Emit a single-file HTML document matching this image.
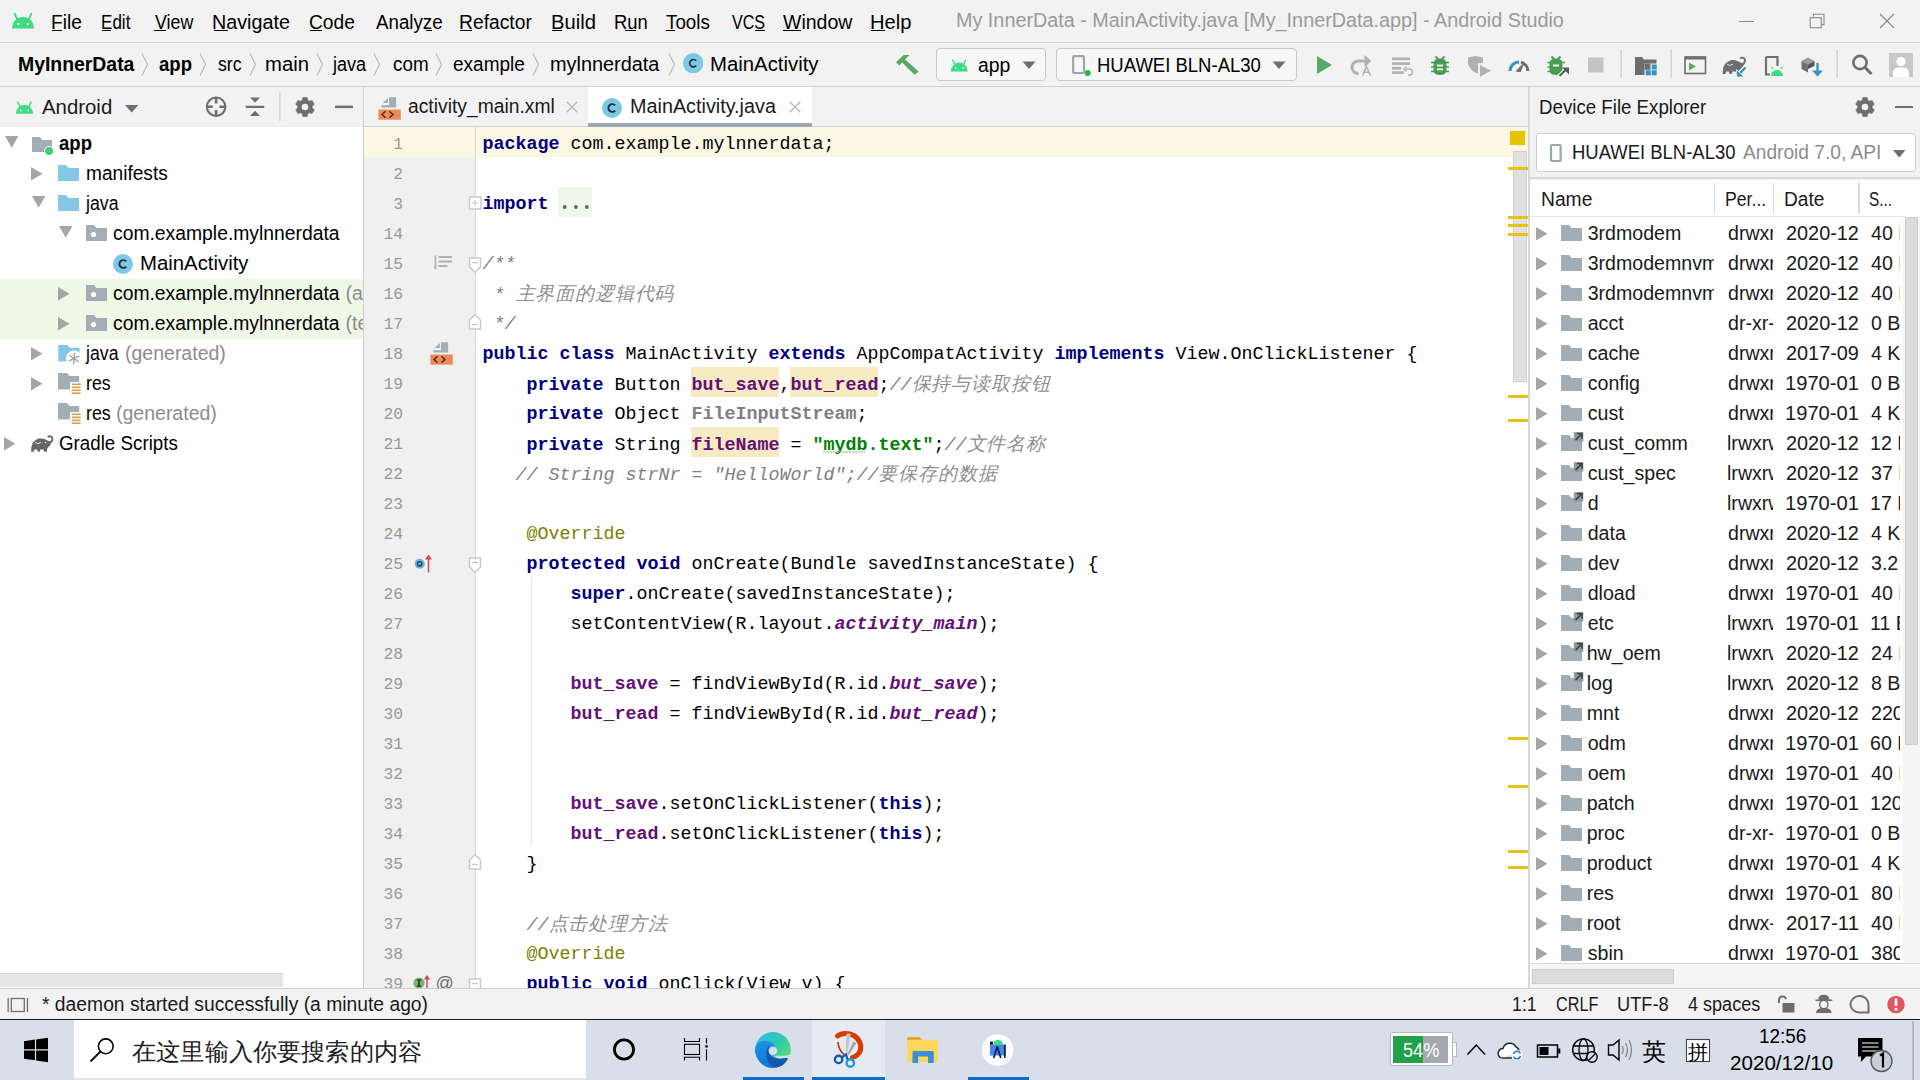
<!DOCTYPE html>
<html><head><meta charset="utf-8"><style>
*{margin:0;padding:0;box-sizing:border-box}
html,body{width:1920px;height:1080px;overflow:hidden;background:#f2f2f2;font-family:"Liberation Sans",sans-serif;color:#000;position:relative}
.a{position:absolute;white-space:nowrap}
#menubar{position:absolute;left:0;top:0;width:1920px;height:43px;background:#f2f2f2;border-bottom:1px solid #d6d6d6}
#navbar{position:absolute;left:0;top:43px;width:1920px;height:44px;background:#f2f2f2;border-bottom:1px solid #d1d1d1}
.k{color:#000080;font-weight:bold}
.s{color:#008000;font-weight:bold}
.c{color:#808080;font-style:italic}
.cj{color:#8f8f8f;font-style:italic;font-size:19px;letter-spacing:0.85px;font-weight:300}
.an{color:#808000}
.f{color:#660e7a;font-weight:bold}
.fi{color:#660e7a;font-weight:bold;font-style:italic}
.u{color:#808080;font-weight:bold}
.n{color:#000}
.dots{color:transparent}

</style></head><body>
<div id="menubar"></div>
<svg class="a" style="left:11px;top:12px" width="24" height="17" viewBox="0 0 24 16"><path d="M1 16 A11 11.5 0 0 1 23 16 Z" fill="#3ddc84"/><path d="M6.2 6.5 L3.6 1.2 M17.8 6.5 L20.4 1.2" stroke="#3ddc84" stroke-width="1.8" stroke-linecap="round"/><circle cx="7.3" cy="11.6" r="1.1" fill="#fff"/><circle cx="16.7" cy="11.6" r="1.1" fill="#fff"/></svg>
<div class="a" style="left:51.32px;top:9.71px;font-family:'Liberation Sans',sans-serif;font-size:19.6px;line-height:25px;color:#000;transform:scaleX(0.9780);transform-origin:0 0">File</div>
<div class="a" style="left:52.3px;top:30px;width:10.2px;height:1.3px;background:#000"></div>
<div class="a" style="left:101.13px;top:9.71px;font-family:'Liberation Sans',sans-serif;font-size:19.6px;line-height:25px;color:#000;transform:scaleX(0.8704);transform-origin:0 0">Edit</div>
<div class="a" style="left:101.9px;top:30px;width:9.4px;height:1.3px;background:#000"></div>
<div class="a" style="left:154.50px;top:9.71px;font-family:'Liberation Sans',sans-serif;font-size:19.6px;line-height:25px;color:#000;transform:scaleX(0.9077);transform-origin:0 0">View</div>
<div class="a" style="left:154px;top:30px;width:11.6px;height:1.3px;background:#000"></div>
<div class="a" style="left:212.49px;top:9.71px;font-family:'Liberation Sans',sans-serif;font-size:19.6px;line-height:25px;color:#000;transform:scaleX(1.0074);transform-origin:0 0">Navigate</div>
<div class="a" style="left:213.5px;top:30px;width:14.5px;height:1.3px;background:#000"></div>
<div class="a" style="left:309.42px;top:9.71px;font-family:'Liberation Sans',sans-serif;font-size:19.6px;line-height:25px;color:#000;transform:scaleX(0.9794);transform-origin:0 0">Code</div>
<div class="a" style="left:310.4px;top:30px;width:11.5px;height:1.3px;background:#000"></div>
<div class="a" style="left:376.00px;top:9.71px;font-family:'Liberation Sans',sans-serif;font-size:19.6px;line-height:25px;color:#000;transform:scaleX(0.9555);transform-origin:0 0">Analyze</div>
<div class="a" style="left:426px;top:30px;width:6.0px;height:1.3px;background:#000"></div>
<div class="a" style="left:459.42px;top:9.71px;font-family:'Liberation Sans',sans-serif;font-size:19.6px;line-height:25px;color:#000;transform:scaleX(0.9833);transform-origin:0 0">Refactor</div>
<div class="a" style="left:460.4px;top:30px;width:11.5px;height:1.3px;background:#000"></div>
<div class="a" style="left:550.97px;top:9.71px;font-family:'Liberation Sans',sans-serif;font-size:19.6px;line-height:25px;color:#000;transform:scaleX(1.0319);transform-origin:0 0">Build</div>
<div class="a" style="left:552px;top:30px;width:9.5px;height:1.3px;background:#000"></div>
<div class="a" style="left:614.06px;top:9.71px;font-family:'Liberation Sans',sans-serif;font-size:19.6px;line-height:25px;color:#000;transform:scaleX(0.9399);transform-origin:0 0">Run</div>
<div class="a" style="left:625.4px;top:30px;width:10.4px;height:1.3px;background:#000"></div>
<div class="a" style="left:666.00px;top:9.71px;font-family:'Liberation Sans',sans-serif;font-size:19.6px;line-height:25px;color:#000;transform:scaleX(0.9577);transform-origin:0 0">Tools</div>
<div class="a" style="left:666px;top:30px;width:9.4px;height:1.3px;background:#000"></div>
<div class="a" style="left:731.70px;top:9.71px;font-family:'Liberation Sans',sans-serif;font-size:19.6px;line-height:25px;color:#000;transform:scaleX(0.8205);transform-origin:0 0">VCS</div>
<div class="a" style="left:754.6px;top:30px;width:10.0px;height:1.3px;background:#000"></div>
<div class="a" style="left:783.30px;top:9.71px;font-family:'Liberation Sans',sans-serif;font-size:19.6px;line-height:25px;color:#000;transform:scaleX(0.9952);transform-origin:0 0">Window</div>
<div class="a" style="left:783.3px;top:30px;width:17.5px;height:1.3px;background:#000"></div>
<div class="a" style="left:870.47px;top:9.71px;font-family:'Liberation Sans',sans-serif;font-size:19.6px;line-height:25px;color:#000;transform:scaleX(1.0279);transform-origin:0 0">Help</div>
<div class="a" style="left:871px;top:30px;width:13.8px;height:1.3px;background:#000"></div>
<div class="a" style="left:955.99px;top:7.71px;font-family:'Liberation Sans',sans-serif;font-size:19.6px;line-height:25px;color:#9a9a9a;transform:scaleX(1.0099);transform-origin:0 0">My InnerData - MainActivity.java [My_InnerData.app] - Android Studio</div>
<div class="a" style="left:1739px;top:21px;width:14.5px;height:1.2px;background:#8a8a8a"></div>
<svg class="a" style="left:1808px;top:12px" width="20" height="18" viewBox="0 0 20 18"><path d="M5.5 4.5 V2.2 H16 V12.6 H13.4" fill="none" stroke="#8a8a8a" stroke-width="1.1"/><rect x="2.2" y="5.7" width="11" height="10" fill="none" stroke="#8a8a8a" stroke-width="1.1"/></svg>
<svg class="a" style="left:1878px;top:12px" width="18" height="18" viewBox="0 0 18 18"><path d="M2 2 L16 16 M16 2 L2 16" stroke="#8a8a8a" stroke-width="1.2"/></svg>
<div id="navbar"></div>
<div class="a" style="left:17.51px;top:51.51px;font-family:'Liberation Sans',sans-serif;font-size:19.6px;line-height:25px;color:#000;font-weight:bold;transform:scaleX(0.9899);transform-origin:0 0">MyInnerData</div>
<svg class="a" style="left:141px;top:53px" width="8" height="23" viewBox="0 0 8 23"><path d="M1 0.5 L6.5 11.5 L1 22.5" fill="none" stroke="#b4b4b4" stroke-width="1.1"/></svg>
<div class="a" style="left:159.00px;top:51.51px;font-family:'Liberation Sans',sans-serif;font-size:19.6px;line-height:25px;color:#000;font-weight:bold;transform:scaleX(0.9465);transform-origin:0 0">app</div>
<svg class="a" style="left:199px;top:53px" width="8" height="23" viewBox="0 0 8 23"><path d="M1 0.5 L6.5 11.5 L1 22.5" fill="none" stroke="#b4b4b4" stroke-width="1.1"/></svg>
<div class="a" style="left:218.00px;top:51.51px;font-family:'Liberation Sans',sans-serif;font-size:19.6px;line-height:25px;color:#000;transform:scaleX(0.9004);transform-origin:0 0">src</div>
<svg class="a" style="left:249px;top:53px" width="8" height="23" viewBox="0 0 8 23"><path d="M1 0.5 L6.5 11.5 L1 22.5" fill="none" stroke="#b4b4b4" stroke-width="1.1"/></svg>
<div class="a" style="left:264.96px;top:51.51px;font-family:'Liberation Sans',sans-serif;font-size:19.6px;line-height:25px;color:#000;transform:scaleX(1.0352);transform-origin:0 0">main</div>
<svg class="a" style="left:315.6px;top:53px" width="8" height="23" viewBox="0 0 8 23"><path d="M1 0.5 L6.5 11.5 L1 22.5" fill="none" stroke="#b4b4b4" stroke-width="1.1"/></svg>
<div class="a" style="left:333.42px;top:51.51px;font-family:'Liberation Sans',sans-serif;font-size:19.6px;line-height:25px;color:#000;transform:scaleX(0.9231);transform-origin:0 0">java</div>
<svg class="a" style="left:373px;top:53px" width="8" height="23" viewBox="0 0 8 23"><path d="M1 0.5 L6.5 11.5 L1 22.5" fill="none" stroke="#b4b4b4" stroke-width="1.1"/></svg>
<div class="a" style="left:392.70px;top:51.51px;font-family:'Liberation Sans',sans-serif;font-size:19.6px;line-height:25px;color:#000;transform:scaleX(0.9620);transform-origin:0 0">com</div>
<svg class="a" style="left:435px;top:53px" width="8" height="23" viewBox="0 0 8 23"><path d="M1 0.5 L6.5 11.5 L1 22.5" fill="none" stroke="#b4b4b4" stroke-width="1.1"/></svg>
<div class="a" style="left:453.00px;top:51.51px;font-family:'Liberation Sans',sans-serif;font-size:19.6px;line-height:25px;color:#000;transform:scaleX(0.9708);transform-origin:0 0">example</div>
<svg class="a" style="left:532px;top:53px" width="8" height="23" viewBox="0 0 8 23"><path d="M1 0.5 L6.5 11.5 L1 22.5" fill="none" stroke="#b4b4b4" stroke-width="1.1"/></svg>
<div class="a" style="left:550.49px;top:51.51px;font-family:'Liberation Sans',sans-serif;font-size:19.6px;line-height:25px;color:#000;transform:scaleX(1.0147);transform-origin:0 0">mylnnerdata</div>
<svg class="a" style="left:668px;top:53px" width="8" height="23" viewBox="0 0 8 23"><path d="M1 0.5 L6.5 11.5 L1 22.5" fill="none" stroke="#b4b4b4" stroke-width="1.1"/></svg>
<svg class="a" style="left:682.8px;top:52.599999999999994px" width="20.4" height="20.4" viewBox="0 0 20 20"><circle cx="10" cy="10" r="10" fill="#7dc8e4"/><path d="M12.9 7.6 A3.6 3.6 0 1 0 12.9 12.4" fill="none" stroke="#1f3140" stroke-width="1.6"/></svg>
<div class="a" style="left:709.96px;top:51.51px;font-family:'Liberation Sans',sans-serif;font-size:19.6px;line-height:25px;color:#000;transform:scaleX(1.0383);transform-origin:0 0">MainActivity</div>
<svg class="a" style="left:891px;top:49px" width="32" height="32" viewBox="0 0 32 32"><path d="M5 13.3 L12.7 5.9 L18.4 5.9 L13.9 10.4 L19.3 15.1 L27.6 22.5 L23.7 25.8 L16 18.4 L11.3 13.3 L8.3 16.6 Z" fill="#57a862"/></svg>
<div class="a" style="left:936px;top:48px;width:110px;height:33px;border:1px solid #c9c9c9;border-radius:4px;background:#f7f7f7"></div>
<svg class="a" style="left:950px;top:59px" width="18.5" height="12.5" viewBox="0 0 24 16"><path d="M1 16 A11 11.5 0 0 1 23 16 Z" fill="#3ddc84"/><path d="M6.2 6.5 L3.6 1.2 M17.8 6.5 L20.4 1.2" stroke="#3ddc84" stroke-width="1.8" stroke-linecap="round"/><circle cx="7.3" cy="11.6" r="1.1" fill="#fff"/><circle cx="16.7" cy="11.6" r="1.1" fill="#fff"/></svg>
<div class="a" style="left:977.50px;top:52.71px;font-family:'Liberation Sans',sans-serif;font-size:19.6px;line-height:25px;color:#000;transform:scaleX(0.9910);transform-origin:0 0">app</div>
<svg class="a" style="left:1022px;top:61px" width="14" height="9" viewBox="0 0 14 9"><path d="M0.5 0.5 H13.5 L7 8 Z" fill="#6e6e6e"/></svg>
<div class="a" style="left:1056px;top:48px;width:241px;height:33px;border:1px solid #c9c9c9;border-radius:4px;background:#f7f7f7"></div>
<svg class="a" style="left:1072px;top:55px" width="20" height="22" viewBox="0 0 20 22"><rect x="1.2" y="1.2" width="10.8" height="16.8" rx="1" fill="none" stroke="#9aa7b0" stroke-width="2.2"/><circle cx="15.7" cy="18" r="3" fill="#1ebf3a"/></svg>
<div class="a" style="left:1097.06px;top:52.71px;font-family:'Liberation Sans',sans-serif;font-size:19.6px;line-height:25px;color:#000;transform:scaleX(0.9444);transform-origin:0 0">HUAWEI BLN-AL30</div>
<svg class="a" style="left:1272px;top:61px" width="14" height="9" viewBox="0 0 14 9"><path d="M0.5 0.5 H13.5 L7 8 Z" fill="#6e6e6e"/></svg>
<svg class="a" style="left:0;top:0" width="1920" height="88" viewBox="0 0 1920 88">
<path d="M1317 56 L1332 65 L1317 74 Z" fill="#59a869"/>
<path d="M1358.5 73.5 A6.2 6.2 0 0 1 1358 61 H1366" fill="none" stroke="#afb1b3" stroke-width="3"/>
<path d="M1364.5 55 L1371.5 61 L1364.5 67 Z" fill="#afb1b3"/>
<path d="M1362.5 75.5 L1366.5 66.5 L1370.5 75.5 M1364 72.3 H1369" fill="none" stroke="#afb1b3" stroke-width="1.5"/>
<rect x="1392" y="57.5" width="18" height="2.6" fill="#afb1b3"/><rect x="1392" y="62.3" width="18" height="2.6" fill="#afb1b3"/><rect x="1392" y="67" width="9" height="2.6" fill="#afb1b3"/><rect x="1392" y="71.3" width="11.8" height="2.6" fill="#afb1b3"/>
<path d="M1406 69 H1409.5 A3 3 0 0 1 1409.5 75 H1408" fill="none" stroke="#afb1b3" stroke-width="1.4"/><path d="M1406.5 66.5 L1404 69 L1406.5 71.5" fill="none" stroke="#afb1b3" stroke-width="1.4"/>
<path d="M1435.5 56.5 L1438.5 59.5 M1444.5 56.5 L1441.5 59.5" stroke="#499c54" stroke-width="1.8"/>
<path d="M1433.5 63 Q1434 58.5 1440 58.5 Q1446 58.5 1446.5 63 L1446.5 70 Q1446.5 75 1440 75 Q1433.5 75 1433.5 70 Z" fill="#499c54"/>
<path d="M1431 62.5 H1449 M1431 67 H1449 M1431 71.5 H1449" stroke="#499c54" stroke-width="1.6"/>
<rect x="1437" y="64.6" width="6" height="1.8" fill="#fff"/><rect x="1437" y="68.4" width="6" height="1.8" fill="#fff"/>
<path d="M1468 57.5 L1475.5 56 L1483 57.5 L1483 63 L1478 63 L1478 73.8 Q1470 71 1468 64 Z" fill="#afb1b3"/><path d="M1480 65 L1491 70.8 L1480 76.7 Z" fill="#afb1b3"/>
<path d="M1510 71 A9 9 0 0 1 1519 62" fill="none" stroke="#3592c4" stroke-width="3"/><path d="M1521 62.3 A9 9 0 0 1 1527.8 71" fill="none" stroke="#6e6e6e" stroke-width="3"/><path d="M1517 71 L1523 64.5 L1520 71.5 Z" fill="#6e6e6e" stroke="#6e6e6e" stroke-width="1.5"/>
<path d="M1551.5 56.5 L1554.5 59.5 M1560.5 56.5 L1557.5 59.5" stroke="#499c54" stroke-width="1.8"/>
<path d="M1549.5 63 Q1550 58.5 1556 58.5 Q1562 58.5 1562.5 63 L1562.5 70 Q1562.5 75 1556 75 Q1549.5 75 1549.5 70 Z" fill="#499c54"/>
<path d="M1547.5 62.5 H1565 M1547.5 67 H1562 M1547.5 71.5 H1556" stroke="#499c54" stroke-width="1.6"/>
<rect x="1553" y="64.6" width="6" height="1.8" fill="#fff"/>
<path d="M1559 76.5 L1566 69.5" stroke="#fff" stroke-width="4"/><path d="M1559.5 76 L1566.5 69" stroke="#5a5a5a" stroke-width="2.2"/><path d="M1562 67.5 H1569 V74.5 Z" fill="#5a5a5a"/>
<rect x="1588" y="57.5" width="15.5" height="15" fill="#c4c4c4"/>
<rect x="1620.5" y="49.5" width="1.3" height="28.5" fill="#cfcfcf"/>
<rect x="1670.5" y="49.5" width="1.3" height="28.5" fill="#cfcfcf"/>
<rect x="1836.5" y="49.5" width="1.3" height="28.5" fill="#cfcfcf"/>
<path d="M1635 57 H1642 L1644 59.5 H1656.5 V75 H1635 Z" fill="#6e6e6e"/>
<rect x="1644.5" y="63.5" width="13" height="13" fill="#f2f2f2"/><rect x="1644.5" y="63.5" width="6" height="6.3" fill="#6e6e6e"/>
<rect x="1651.7" y="64.5" width="5" height="5" fill="#3592c4"/><rect x="1645.8" y="70.3" width="5" height="5" fill="#3592c4"/><rect x="1651.7" y="70.3" width="5" height="5" fill="#3592c4"/>
<rect x="1685" y="57" width="20.5" height="16.5" fill="none" stroke="#6e6e6e" stroke-width="1.6"/><rect x="1685" y="56.5" width="20.5" height="3" fill="#6e6e6e"/><path d="M1689 62.5 L1696 66.5 L1689 70.5 Z" fill="#59a869"/>
<g transform="translate(1717.25 49) scale(1.05)"><path d="M5.2 23.7 C5 17 7 12.5 13 10.6 C17 9.8 20 11.5 22.5 13 L25.5 13.5 L24.5 17 C23 18.5 21.5 19.5 21 21 L21 23.7 L18.2 23.7 L17.5 21.5 L14.5 21.5 L13.5 23.7 L11.8 23.7 L11 21.5 L8.5 21.5 L7.8 23.7 Z" fill="#6e6e6e"/><path d="M21.5 15.5 C25 14.8 26.6 12.6 26.4 10.5 C26.1 8.4 24 7.6 21.6 8.9" fill="none" stroke="#6e6e6e" stroke-width="1.8"/><path d="M9.3 14.3 Q11.3 16.8 14.8 14.6" fill="none" stroke="#f2f2f2" stroke-width="0.9"/></g>
<path d="M1746.5 66.5 L1738.5 74.5" stroke="#f2f2f2" stroke-width="5"/><path d="M1745.5 67.5 L1739 74" stroke="#3592c4" stroke-width="2.4"/><path d="M1736.5 69.5 V77 H1744 Z" fill="#3592c4" stroke="#f2f2f2" stroke-width="0.8"/>
<path d="M1766 57 H1777.5 V66 M1766 57 V74.5 H1770" fill="none" stroke="#6e6e6e" stroke-width="2.2"/>
<path d="M1771 76 A6 6 0 0 1 1783 76 Z" fill="#3ddc84"/><path d="M1773 69 L1771.5 66.8 M1781 69 L1782.5 66.8" stroke="#3ddc84" stroke-width="1.2"/>
<path d="M1801.5 61 L1808 57.5 L1814.5 61 L1808 64.5 Z" fill="#9a9a9a"/><path d="M1801.5 61 V69 L1808 72.5 V64.5 Z" fill="#6e6e6e"/><path d="M1814.5 61 V66 L1808 69 V64.5 Z" fill="#555"/>
<path d="M1817.5 63 V75" stroke="#3592c4" stroke-width="2.4"/><path d="M1812 70.5 L1817.5 76.5 L1823 70.5 Z" fill="#3592c4"/>
<circle cx="1860" cy="62.5" r="6.6" fill="none" stroke="#6e6e6e" stroke-width="2.6"/><path d="M1865 67.5 L1871.5 74" stroke="#6e6e6e" stroke-width="3"/>
<rect x="1889" y="53" width="24" height="24" fill="#c8c8c8"/><circle cx="1901" cy="61.5" r="4.6" fill="#fff"/><path d="M1893 77 V73 Q1893 67.5 1899 67.5 H1903 Q1909 67.5 1909 73 V77 Z" fill="#fff"/>
</svg>
<div class="a" style="left:0;top:87px;width:363px;height:40px;background:#f2f2f2"></div>
<div class="a" style="left:0;top:127px;width:363px;height:861px;background:#fff"></div>
<svg class="a" style="left:14.5px;top:100.5px" width="19" height="13" viewBox="0 0 24 16"><path d="M1 16 A11 11.5 0 0 1 23 16 Z" fill="#3ddc84"/><path d="M6.2 6.5 L3.6 1.2 M17.8 6.5 L20.4 1.2" stroke="#3ddc84" stroke-width="1.8" stroke-linecap="round"/><circle cx="7.3" cy="11.6" r="1.1" fill="#fff"/><circle cx="16.7" cy="11.6" r="1.1" fill="#fff"/></svg>
<div class="a" style="left:42.40px;top:94.71px;font-family:'Liberation Sans',sans-serif;font-size:19.6px;line-height:25px;color:#1a1a1a;transform:scaleX(1.0399);transform-origin:0 0">Android</div>
<svg class="a" style="left:125px;top:104.5px" width="14" height="8" viewBox="0 0 14 8"><path d="M0 0 H13.4 L6.7 7.6 Z" fill="#6e6e6e"/></svg>
<svg class="a" style="left:200px;top:90px" width="170" height="34" viewBox="200 90 170 34"><circle cx="216.1" cy="106.7" r="9.2" fill="none" stroke="#6e6e6e" stroke-width="2.2"/><path d="M207 106.7 H212.8 M219.4 106.7 H225.2 M216.1 97.6 V103.4 M216.1 110 V115.8" stroke="#6e6e6e" stroke-width="2.6"/><path d="M250 97.5 H260 L255 102.8 Z M250 116 H260 L255 110.7 Z" fill="#6e6e6e"/><rect x="245.7" y="105.8" width="18.5" height="2.2" fill="#6e6e6e"/><rect x="279.3" y="92" width="1.2" height="29" fill="#cfcfcf"/><rect x="335" y="105.6" width="18" height="2.5" fill="#6e6e6e"/></svg>
<svg class="a" style="left:0;top:0;overflow:visible" width="1" height="1"><path d="M302.08 100.44 L302.82 97.55 L307.18 97.55 L307.92 100.44 L309.22 101.19 L312.09 100.38 L314.28 104.16 L312.14 106.25 L312.14 107.75 L314.28 109.84 L312.09 113.62 L309.22 112.81 L307.92 113.56 L307.18 116.45 L302.82 116.45 L302.08 113.56 L300.78 112.81 L297.91 113.62 L295.72 109.84 L297.86 107.75 L297.86 106.25 L295.72 104.16 L297.91 100.38 L300.78 101.19 Z" fill="#6e6e6e" stroke="#6e6e6e" stroke-width="0.6" stroke-linejoin="round"/><circle cx="305" cy="107" r="3.30" fill="#f2f2f2"/></svg>
<div class="a" style="left:0;top:279px;width:363px;height:60px;background:#eff7e7"></div>
<svg class="a" style="left:4.5px;top:136px" width="14" height="12" viewBox="0 0 14 12"><path d="M0 0 H13.4 L6.7 11.8 Z" fill="#a5a5a5"/></svg>
<svg class="a" style="left:31.7px;top:136.7px" width="20.5" height="15.8" viewBox="0 0 21 16"><path d="M0 0 H8 L10.5 3 H21 V16 H0 Z" fill="#a2adb6"/></svg>
<div class="a" style="left:43.7px;top:145.5px;width:10px;height:10px;border-radius:50%;background:#3ecf6e;border:1.3px solid #fff"></div>
<div class="a" style="left:59.40px;top:131.11px;font-family:'Liberation Sans',sans-serif;font-size:19.6px;line-height:25px;color:#000;font-weight:bold;transform:scaleX(0.9465);transform-origin:0 0">app</div>
<svg class="a" style="left:31px;top:166.6px" width="12" height="14" viewBox="0 0 12 14"><path d="M0 0 L11.5 6.8 L0 13.6 Z" fill="#a5a5a5"/></svg>
<svg class="a" style="left:58.3px;top:165px" width="21" height="16" viewBox="0 0 21 16"><path d="M0 0 H8 L10.5 3 H21 V16 H0 Z" fill="#87c7e6"/></svg>
<div class="a" style="left:85.72px;top:161.01px;font-family:'Liberation Sans',sans-serif;font-size:19.6px;line-height:25px;color:#000;transform:scaleX(0.9753);transform-origin:0 0">manifests</div>
<svg class="a" style="left:31.7px;top:196px" width="14" height="12" viewBox="0 0 14 12"><path d="M0 0 H13.4 L6.7 11.8 Z" fill="#a5a5a5"/></svg>
<svg class="a" style="left:58.3px;top:195px" width="21" height="16" viewBox="0 0 21 16"><path d="M0 0 H8 L10.5 3 H21 V16 H0 Z" fill="#87c7e6"/></svg>
<div class="a" style="left:86.40px;top:191.01px;font-family:'Liberation Sans',sans-serif;font-size:19.6px;line-height:25px;color:#000;transform:scaleX(0.9043);transform-origin:0 0">java</div>
<svg class="a" style="left:59px;top:226px" width="14" height="12" viewBox="0 0 14 12"><path d="M0 0 H13.4 L6.7 11.8 Z" fill="#a5a5a5"/></svg>
<svg class="a" style="left:85.5px;top:225px" width="21" height="16" viewBox="0 0 21 16"><path d="M0 0 H8 L10.5 3 H21 V16 H0 Z" fill="#a2adb6"/><circle cx="7.5" cy="9.5" r="2.6" fill="#fff"/></svg>
<div class="a" style="left:113.30px;top:221.01px;font-family:'Liberation Sans',sans-serif;font-size:19.6px;line-height:25px;color:#000;transform:scaleX(0.9861);transform-origin:0 0">com.example.mylnnerdata</div>
<svg class="a" style="left:112.8px;top:253.8px" width="20" height="20" viewBox="0 0 20 20"><circle cx="10" cy="10" r="10" fill="#7dc8e4"/><path d="M13.2 7.4 A3.9 3.9 0 1 0 13.2 12.6" fill="none" stroke="#1f3140" stroke-width="1.9"/></svg>
<div class="a" style="left:139.66px;top:251.01px;font-family:'Liberation Sans',sans-serif;font-size:19.6px;line-height:25px;color:#000;transform:scaleX(1.0383);transform-origin:0 0">MainActivity</div>
<svg class="a" style="left:58px;top:286.6px" width="12" height="14" viewBox="0 0 12 14"><path d="M0 0 L11.5 6.8 L0 13.6 Z" fill="#a5a5a5"/></svg>
<svg class="a" style="left:85.5px;top:285px" width="21" height="16" viewBox="0 0 21 16"><path d="M0 0 H8 L10.5 3 H21 V16 H0 Z" fill="#a2adb6"/><circle cx="7.5" cy="9.5" r="2.6" fill="#fff"/></svg>
<div class="a" style="left:113.30px;top:281.01px;font-family:'Liberation Sans',sans-serif;font-size:19.6px;line-height:25px;color:#000;transform:scaleX(0.9861);transform-origin:0 0">com.example.mylnnerdata</div>
<div class="a" style="left:346px;top:278px;width:17px;height:30px;overflow:hidden"><div style="position:absolute;left:-346px;top:0"><div class="a" style="left:345.50px;top:3.01px;font-family:'Liberation Sans',sans-serif;font-size:19.6px;line-height:25px;color:#8c8c8c">(androidTest)</div></div></div>
<svg class="a" style="left:58px;top:316.6px" width="12" height="14" viewBox="0 0 12 14"><path d="M0 0 L11.5 6.8 L0 13.6 Z" fill="#a5a5a5"/></svg>
<svg class="a" style="left:85.5px;top:315px" width="21" height="16" viewBox="0 0 21 16"><path d="M0 0 H8 L10.5 3 H21 V16 H0 Z" fill="#a2adb6"/><circle cx="7.5" cy="9.5" r="2.6" fill="#fff"/></svg>
<div class="a" style="left:113.30px;top:311.01px;font-family:'Liberation Sans',sans-serif;font-size:19.6px;line-height:25px;color:#000;transform:scaleX(0.9861);transform-origin:0 0">com.example.mylnnerdata</div>
<div class="a" style="left:346px;top:308px;width:17px;height:30px;overflow:hidden"><div style="position:absolute;left:-346px;top:0"><div class="a" style="left:345.50px;top:3.01px;font-family:'Liberation Sans',sans-serif;font-size:19.6px;line-height:25px;color:#8c8c8c">(test)</div></div></div>
<svg class="a" style="left:31px;top:346.6px" width="12" height="14" viewBox="0 0 12 14"><path d="M0 0 L11.5 6.8 L0 13.6 Z" fill="#a5a5a5"/></svg>
<svg class="a" style="left:55px;top:338px" width="32" height="32" viewBox="0 0 32 32"><path d="M3.3 7.1 H12.3 L14.8 9.8 H24.6 V23.4 H3.3 Z" fill="#87c7e6"/><circle cx="19" cy="20.4" r="8" fill="#fff"/><g fill="#9aa4ab" transform="translate(19 20.4)"><path d="M0 -0.8 C-1.2 -3.2 -0.6 -5.6 1.6 -6.2 C0.4 -4.4 0.8 -2.4 1.2 -0.4 Z" transform="rotate(0)"/><path d="M0 -0.8 C-1.2 -3.2 -0.6 -5.6 1.6 -6.2 C0.4 -4.4 0.8 -2.4 1.2 -0.4 Z" transform="rotate(60)"/><path d="M0 -0.8 C-1.2 -3.2 -0.6 -5.6 1.6 -6.2 C0.4 -4.4 0.8 -2.4 1.2 -0.4 Z" transform="rotate(120)"/><path d="M0 -0.8 C-1.2 -3.2 -0.6 -5.6 1.6 -6.2 C0.4 -4.4 0.8 -2.4 1.2 -0.4 Z" transform="rotate(180)"/><path d="M0 -0.8 C-1.2 -3.2 -0.6 -5.6 1.6 -6.2 C0.4 -4.4 0.8 -2.4 1.2 -0.4 Z" transform="rotate(240)"/><path d="M0 -0.8 C-1.2 -3.2 -0.6 -5.6 1.6 -6.2 C0.4 -4.4 0.8 -2.4 1.2 -0.4 Z" transform="rotate(300)"/><circle r="1"/></g></svg>
<div class="a" style="left:86.40px;top:341.01px;font-family:'Liberation Sans',sans-serif;font-size:19.6px;line-height:25px;color:#000;transform:scaleX(0.9043);transform-origin:0 0">java</div>
<div class="a" style="left:124.70px;top:341.01px;font-family:'Liberation Sans',sans-serif;font-size:19.6px;line-height:25px;color:#8c8c8c;transform:scaleX(0.9953);transform-origin:0 0">(generated)</div>
<svg class="a" style="left:31px;top:376.6px" width="12" height="14" viewBox="0 0 12 14"><path d="M0 0 L11.5 6.8 L0 13.6 Z" fill="#a5a5a5"/></svg>
<svg class="a" style="left:58.3px;top:373px" width="24" height="22" viewBox="0 0 24 22"><path d="M0 0 H9 L11.6 3 H21.2 V16.4 H0 Z" fill="#a2adb6"/><rect x="12.1" y="9" width="11" height="13" fill="#fff"/><rect x="13.7" y="10.5" width="8.9" height="1.6" fill="#d9a050"/><rect x="13.7" y="13.5" width="8.9" height="1.6" fill="#d9a050"/><rect x="13.7" y="16.5" width="8.9" height="1.6" fill="#d9a050"/><rect x="13.7" y="19.4" width="8.9" height="1.6" fill="#d9a050"/></svg>
<div class="a" style="left:85.79px;top:371.01px;font-family:'Liberation Sans',sans-serif;font-size:19.6px;line-height:25px;color:#000;transform:scaleX(0.9083);transform-origin:0 0">res</div>
<svg class="a" style="left:58.3px;top:403px" width="24" height="22" viewBox="0 0 24 22"><path d="M0 0 H9 L11.6 3 H21.2 V16.4 H0 Z" fill="#a2adb6"/><rect x="12.1" y="9" width="11" height="13" fill="#fff"/><rect x="13.7" y="10.5" width="8.9" height="1.6" fill="#d9a050"/><rect x="13.7" y="13.5" width="8.9" height="1.6" fill="#d9a050"/><rect x="13.7" y="16.5" width="8.9" height="1.6" fill="#d9a050"/><rect x="13.7" y="19.4" width="8.9" height="1.6" fill="#d9a050"/></svg>
<div class="a" style="left:85.79px;top:401.01px;font-family:'Liberation Sans',sans-serif;font-size:19.6px;line-height:25px;color:#000;transform:scaleX(0.9083);transform-origin:0 0">res</div>
<div class="a" style="left:115.70px;top:401.01px;font-family:'Liberation Sans',sans-serif;font-size:19.6px;line-height:25px;color:#8c8c8c;transform:scaleX(0.9953);transform-origin:0 0">(generated)</div>
<svg class="a" style="left:4px;top:436.6px" width="12" height="14" viewBox="0 0 12 14"><path d="M0 0 L11.5 6.8 L0 13.6 Z" fill="#a5a5a5"/></svg>
<svg class="a" style="left:26px;top:428px" width="32" height="32" viewBox="0 0 32 32"><path d="M5.2 23.7 C5 17 7 12.5 13 10.6 C17 9.8 20 11.5 22.5 13 L25.5 13.5 L24.5 17 C23 18.5 21.5 19.5 21 21 L21 23.7 L18.2 23.7 L17.5 21.5 L14.5 21.5 L13.5 23.7 L11.8 23.7 L11 21.5 L8.5 21.5 L7.8 23.7 Z" fill="#666"/><path d="M21.5 15.5 C25 14.8 26.6 12.6 26.4 10.5 C26.1 8.4 24 7.6 21.6 8.9" fill="none" stroke="#666" stroke-width="1.8"/><path d="M9.3 14.3 Q11.3 16.8 14.8 14.6" fill="none" stroke="#fff" stroke-width="0.9"/><circle cx="19.6" cy="14.5" r="0.7" fill="#fff"/></svg>
<div class="a" style="left:59.30px;top:431.01px;font-family:'Liberation Sans',sans-serif;font-size:19.6px;line-height:25px;color:#000;transform:scaleX(0.9571);transform-origin:0 0">Gradle Scripts</div>
<div class="a" style="left:0;top:973px;width:283px;height:14px;background:#e4e4e4;border-top:1px solid #d4d4d4"></div>
<div class="a" style="left:364px;top:87px;width:1164px;height:40px;background:#f2f2f2;border-bottom:1px solid #d1d1d1"></div>
<div class="a" style="left:363px;top:87px;width:1px;height:901px;background:#d1d1d1"></div>
<svg class="a" style="left:374px;top:92px" width="32" height="32" viewBox="0 0 32 32"><path d="M15 5.3 H22.1 V15.6 H7.4 V13.3 H15 Z" fill="#a2adb6"/><path d="M8.9 11 L13.9 6 V11 Z" fill="#a2adb6"/><rect x="4.4" y="17.5" width="22.4" height="10.2" fill="#ea8a5e"/><path d="M11.6 19.3 L8 22.5 L11.6 25.8 M15.4 19.3 L19 22.5 L15.4 25.8" fill="none" stroke="#5e2a10" stroke-width="1.5"/></svg>
<div class="a" style="left:407.50px;top:94.31px;font-family:'Liberation Sans',sans-serif;font-size:19.6px;line-height:25px;color:#1a1a1a;transform:scaleX(0.9845);transform-origin:0 0">activity_main.xml</div>
<svg class="a" style="left:566px;top:100.5px" width="12" height="12" viewBox="0 0 12 12"><path d="M0.7 0.7 L11.3 11.3 M11.3 0.7 L0.7 11.3" stroke="#b8b8b8" stroke-width="1.4"/></svg>
<div class="a" style="left:588px;top:87px;width:224px;height:36px;background:#fff"></div>
<div class="a" style="left:588px;top:123px;width:224px;height:4px;background:#9ca7b8"></div>
<svg class="a" style="left:602px;top:98px" width="20" height="20" viewBox="0 0 20 20"><circle cx="10" cy="10" r="10" fill="#7dc8e4"/><path d="M13.2 7.4 A3.9 3.9 0 1 0 13.2 12.6" fill="none" stroke="#1f3140" stroke-width="1.9"/></svg>
<div class="a" style="left:629.99px;top:94.31px;font-family:'Liberation Sans',sans-serif;font-size:19.6px;line-height:25px;color:#1a1a1a;transform:scaleX(1.0100);transform-origin:0 0">MainActivity.java</div>
<svg class="a" style="left:788.5px;top:101px" width="12" height="12" viewBox="0 0 12 12"><path d="M0.7 0.7 L11.3 11.3 M11.3 0.7 L0.7 11.3" stroke="#b8b8b8" stroke-width="1.4"/></svg>
<div class="a" style="left:364px;top:127px;width:1164px;height:861px;background:#fff;overflow:hidden">
<div class="a" style="left:0;top:0;width:111px;height:861px;background:#f0f0f0"></div>
<div class="a" style="left:110.5px;top:0;width:1.5px;height:861px;background:#d9d9d9"></div>
<div class="a" style="left:0;top:0;width:111px;height:30px;background:#fcf7e2"></div>
<div class="a" style="left:112px;top:0;width:1052px;height:30px;background:#fdf8e4"></div>
</div>
<div class="a" style="left:339px;top:129.6px;width:64px;text-align:right;font-family:'Liberation Mono',monospace;font-size:16.3px;line-height:30px;color:#999">1</div>
<div class="a" style="left:482.5px;top:130.0px;white-space:pre;font-family:'Liberation Mono',monospace;font-size:18.33px;line-height:30px"><span class="k">package</span><span class="n"> com.example.mylnnerdata;</span></div>
<div class="a" style="left:339px;top:159.6px;width:64px;text-align:right;font-family:'Liberation Mono',monospace;font-size:16.3px;line-height:30px;color:#999">2</div>
<div class="a" style="left:339px;top:189.6px;width:64px;text-align:right;font-family:'Liberation Mono',monospace;font-size:16.3px;line-height:30px;color:#999">3</div>
<div class="a" style="left:558.0px;top:187px;width:33.5px;height:30px;background:#edf7ea"></div>
<div class="a" style="left:482.5px;top:190.0px;white-space:pre;font-family:'Liberation Mono',monospace;font-size:18.33px;line-height:30px"><span class="k">import</span><span class="n"> </span><span class="dots">...</span></div>
<div class="a" style="left:339px;top:219.6px;width:64px;text-align:right;font-family:'Liberation Mono',monospace;font-size:16.3px;line-height:30px;color:#999">14</div>
<div class="a" style="left:339px;top:249.6px;width:64px;text-align:right;font-family:'Liberation Mono',monospace;font-size:16.3px;line-height:30px;color:#999">15</div>
<div class="a" style="left:482.5px;top:250.0px;white-space:pre;font-family:'Liberation Mono',monospace;font-size:18.33px;line-height:30px"><span class="c">/**</span></div>
<div class="a" style="left:339px;top:279.6px;width:64px;text-align:right;font-family:'Liberation Mono',monospace;font-size:16.3px;line-height:30px;color:#999">16</div>
<div class="a" style="left:482.5px;top:280.0px;white-space:pre;font-family:'Liberation Mono',monospace;font-size:18.33px;line-height:30px"><span class="c"> * </span><span class="cj">主界面的逻辑代码</span></div>
<div class="a" style="left:339px;top:309.6px;width:64px;text-align:right;font-family:'Liberation Mono',monospace;font-size:16.3px;line-height:30px;color:#999">17</div>
<div class="a" style="left:482.5px;top:310.0px;white-space:pre;font-family:'Liberation Mono',monospace;font-size:18.33px;line-height:30px"><span class="c"> */</span></div>
<div class="a" style="left:339px;top:339.6px;width:64px;text-align:right;font-family:'Liberation Mono',monospace;font-size:16.3px;line-height:30px;color:#999">18</div>
<div class="a" style="left:482.5px;top:340.0px;white-space:pre;font-family:'Liberation Mono',monospace;font-size:18.33px;line-height:30px"><span class="k">public</span><span class="n"> </span><span class="k">class</span><span class="n"> MainActivity </span><span class="k">extends</span><span class="n"> AppCompatActivity </span><span class="k">implements</span><span class="n"> View.OnClickListener {</span></div>
<div class="a" style="left:339px;top:369.6px;width:64px;text-align:right;font-family:'Liberation Mono',monospace;font-size:16.3px;line-height:30px;color:#999">19</div>
<div class="a" style="left:691.0px;top:367px;width:88.0px;height:30px;background:#f5eac2"></div>
<div class="a" style="left:790.0px;top:367px;width:88.0px;height:30px;background:#f5eac2"></div>
<div class="a" style="left:482.5px;top:370.0px;white-space:pre;font-family:'Liberation Mono',monospace;font-size:18.33px;line-height:30px"><span class="n">    </span><span class="k">private</span><span class="n"> Button </span><span class="f">but_save</span><span class="n">,</span><span class="f">but_read</span><span class="n">;</span><span class="c">//</span><span class="cj">保持与读取按钮</span></div>
<div class="a" style="left:339px;top:399.6px;width:64px;text-align:right;font-family:'Liberation Mono',monospace;font-size:16.3px;line-height:30px;color:#999">20</div>
<div class="a" style="left:482.5px;top:400.0px;white-space:pre;font-family:'Liberation Mono',monospace;font-size:18.33px;line-height:30px"><span class="n">    </span><span class="k">private</span><span class="n"> Object </span><span class="u">FileInputStream</span><span class="n">;</span></div>
<div class="a" style="left:339px;top:429.6px;width:64px;text-align:right;font-family:'Liberation Mono',monospace;font-size:16.3px;line-height:30px;color:#999">21</div>
<div class="a" style="left:691.0px;top:427px;width:88.0px;height:30px;background:#f5eac2"></div>
<div class="a" style="left:482.5px;top:430.0px;white-space:pre;font-family:'Liberation Mono',monospace;font-size:18.33px;line-height:30px"><span class="n">    </span><span class="k">private</span><span class="n"> String </span><span class="f">fileName</span><span class="n"> = </span><span class="s">&quot;mydb.text&quot;</span><span class="n">;</span><span class="c">//</span><span class="cj">文件名称</span></div>
<div class="a" style="left:339px;top:459.6px;width:64px;text-align:right;font-family:'Liberation Mono',monospace;font-size:16.3px;line-height:30px;color:#999">22</div>
<div class="a" style="left:482.5px;top:460.0px;white-space:pre;font-family:'Liberation Mono',monospace;font-size:18.33px;line-height:30px"><span class="n">   </span><span class="c">// String strNr = &quot;HelloWorld&quot;;//</span><span class="cj">要保存的数据</span></div>
<div class="a" style="left:339px;top:489.6px;width:64px;text-align:right;font-family:'Liberation Mono',monospace;font-size:16.3px;line-height:30px;color:#999">23</div>
<div class="a" style="left:339px;top:519.6px;width:64px;text-align:right;font-family:'Liberation Mono',monospace;font-size:16.3px;line-height:30px;color:#999">24</div>
<div class="a" style="left:482.5px;top:520.0px;white-space:pre;font-family:'Liberation Mono',monospace;font-size:18.33px;line-height:30px"><span class="n">    </span><span class="an">@Override</span></div>
<div class="a" style="left:339px;top:549.6px;width:64px;text-align:right;font-family:'Liberation Mono',monospace;font-size:16.3px;line-height:30px;color:#999">25</div>
<div class="a" style="left:482.5px;top:550.0px;white-space:pre;font-family:'Liberation Mono',monospace;font-size:18.33px;line-height:30px"><span class="n">    </span><span class="k">protected</span><span class="n"> </span><span class="k">void</span><span class="n"> onCreate(Bundle savedInstanceState) {</span></div>
<div class="a" style="left:339px;top:579.6px;width:64px;text-align:right;font-family:'Liberation Mono',monospace;font-size:16.3px;line-height:30px;color:#999">26</div>
<div class="a" style="left:482.5px;top:580.0px;white-space:pre;font-family:'Liberation Mono',monospace;font-size:18.33px;line-height:30px"><span class="n">        </span><span class="k">super</span><span class="n">.onCreate(savedInstanceState);</span></div>
<div class="a" style="left:339px;top:609.6px;width:64px;text-align:right;font-family:'Liberation Mono',monospace;font-size:16.3px;line-height:30px;color:#999">27</div>
<div class="a" style="left:482.5px;top:610.0px;white-space:pre;font-family:'Liberation Mono',monospace;font-size:18.33px;line-height:30px"><span class="n">        setContentView(R.layout.</span><span class="fi">activity_main</span><span class="n">);</span></div>
<div class="a" style="left:339px;top:639.6px;width:64px;text-align:right;font-family:'Liberation Mono',monospace;font-size:16.3px;line-height:30px;color:#999">28</div>
<div class="a" style="left:339px;top:669.6px;width:64px;text-align:right;font-family:'Liberation Mono',monospace;font-size:16.3px;line-height:30px;color:#999">29</div>
<div class="a" style="left:482.5px;top:670.0px;white-space:pre;font-family:'Liberation Mono',monospace;font-size:18.33px;line-height:30px"><span class="n">        </span><span class="f">but_save</span><span class="n"> = findViewById(R.id.</span><span class="fi">but_save</span><span class="n">);</span></div>
<div class="a" style="left:339px;top:699.6px;width:64px;text-align:right;font-family:'Liberation Mono',monospace;font-size:16.3px;line-height:30px;color:#999">30</div>
<div class="a" style="left:482.5px;top:700.0px;white-space:pre;font-family:'Liberation Mono',monospace;font-size:18.33px;line-height:30px"><span class="n">        </span><span class="f">but_read</span><span class="n"> = findViewById(R.id.</span><span class="fi">but_read</span><span class="n">);</span></div>
<div class="a" style="left:339px;top:729.6px;width:64px;text-align:right;font-family:'Liberation Mono',monospace;font-size:16.3px;line-height:30px;color:#999">31</div>
<div class="a" style="left:339px;top:759.6px;width:64px;text-align:right;font-family:'Liberation Mono',monospace;font-size:16.3px;line-height:30px;color:#999">32</div>
<div class="a" style="left:339px;top:789.6px;width:64px;text-align:right;font-family:'Liberation Mono',monospace;font-size:16.3px;line-height:30px;color:#999">33</div>
<div class="a" style="left:482.5px;top:790.0px;white-space:pre;font-family:'Liberation Mono',monospace;font-size:18.33px;line-height:30px"><span class="n">        </span><span class="f">but_save</span><span class="n">.setOnClickListener(</span><span class="k">this</span><span class="n">);</span></div>
<div class="a" style="left:339px;top:819.6px;width:64px;text-align:right;font-family:'Liberation Mono',monospace;font-size:16.3px;line-height:30px;color:#999">34</div>
<div class="a" style="left:482.5px;top:820.0px;white-space:pre;font-family:'Liberation Mono',monospace;font-size:18.33px;line-height:30px"><span class="n">        </span><span class="f">but_read</span><span class="n">.setOnClickListener(</span><span class="k">this</span><span class="n">);</span></div>
<div class="a" style="left:339px;top:849.6px;width:64px;text-align:right;font-family:'Liberation Mono',monospace;font-size:16.3px;line-height:30px;color:#999">35</div>
<div class="a" style="left:482.5px;top:850.0px;white-space:pre;font-family:'Liberation Mono',monospace;font-size:18.33px;line-height:30px"><span class="n">    }</span></div>
<div class="a" style="left:339px;top:879.6px;width:64px;text-align:right;font-family:'Liberation Mono',monospace;font-size:16.3px;line-height:30px;color:#999">36</div>
<div class="a" style="left:339px;top:909.6px;width:64px;text-align:right;font-family:'Liberation Mono',monospace;font-size:16.3px;line-height:30px;color:#999">37</div>
<div class="a" style="left:482.5px;top:910.0px;white-space:pre;font-family:'Liberation Mono',monospace;font-size:18.33px;line-height:30px"><span class="n">    </span><span class="c">//</span><span class="cj">点击处理方法</span></div>
<div class="a" style="left:339px;top:939.6px;width:64px;text-align:right;font-family:'Liberation Mono',monospace;font-size:16.3px;line-height:30px;color:#999">38</div>
<div class="a" style="left:482.5px;top:940.0px;white-space:pre;font-family:'Liberation Mono',monospace;font-size:18.33px;line-height:30px"><span class="n">    </span><span class="an">@Override</span></div>
<div class="a" style="left:339px;top:969.6px;width:64px;text-align:right;font-family:'Liberation Mono',monospace;font-size:16.3px;line-height:30px;color:#999">39</div>
<div class="a" style="left:482.5px;top:970.0px;white-space:pre;font-family:'Liberation Mono',monospace;font-size:18.33px;line-height:30px"><span class="n">    </span><span class="k">public</span><span class="n"> </span><span class="k">void</span><span class="n"> onClick(View v) {</span></div>
<svg class="a" style="left:0;top:0;overflow:visible" width="1" height="1"><circle cx="564.7" cy="207" r="1.9" fill="#5a6b5a"/><circle cx="575.9" cy="207" r="1.9" fill="#5a6b5a"/><circle cx="586.8" cy="207" r="1.9" fill="#5a6b5a"/></svg>
<svg class="a" style="left:823px;top:450px" width="44" height="4" viewBox="0 0 44 4"><path d="M0 3 L1.5 0.8 L3 3 L4.5 0.8 L6 3 L7.5 0.8 L9 3 L10.5 0.8 L12 3 L13.5 0.8 L15 3 L16.5 0.8 L18 3 L19.5 0.8 L21 3 L22.5 0.8 L24 3 L25.5 0.8 L27 3 L28.5 0.8 L30 3 L31.5 0.8 L33 3 L34.5 0.8 L36 3 L37.5 0.8 L39 3 L40.5 0.8 L42 3" fill="none" stroke="#a8c8a8" stroke-width="0.9"/></svg>
<div class="a" style="left:531px;top:578px;width:1px;height:267px;background:#e4e4e4"></div>
<svg class="a" style="left:0;top:0;overflow:visible" width="1" height="1"><rect x="434.5" y="255.5" width="1.8" height="14" fill="#afb1b3"/><rect x="438.5" y="256" width="13.5" height="2" fill="#afb1b3"/><rect x="438.5" y="260.5" width="13.5" height="2" fill="#afb1b3"/><rect x="438.5" y="265" width="9" height="2" fill="#afb1b3"/><circle cx="419.7" cy="563.8" r="5" fill="#6cb4d8"/><circle cx="419.7" cy="563.8" r="2.2" fill="none" stroke="#1f3e66" stroke-width="1.3"/><path d="M428.5 572.5 V556" stroke="#d9475a" stroke-width="1.5"/><path d="M425 559.5 L428.5 554.5 L432 559.5 Z" fill="#d9475a"/><circle cx="419" cy="983" r="5.6" fill="#77b767"/><rect x="418.3" y="979.8" width="1.4" height="6.5" fill="#222"/><rect x="416.8" y="979.5" width="4.4" height="1.1" fill="#222"/><rect x="416.8" y="985.5" width="4.4" height="1.1" fill="#222"/><path d="M427 990 V977" stroke="#d9475a" stroke-width="1.5"/><path d="M423.8 979.5 L427 975 L430.2 979.5 Z" fill="#d9475a"/></svg>
<svg class="a" style="left:426px;top:337px" width="32" height="32" viewBox="0 0 32 32"><path d="M15 5.3 H22.1 V15.6 H7.4 V13.3 H15 Z" fill="#a2adb6"/><path d="M8.9 11 L13.9 6 V11 Z" fill="#a2adb6"/><rect x="4.4" y="17.5" width="22.4" height="10.2" fill="#ea8a5e"/><path d="M11.6 19.3 L8 22.5 L11.6 25.8 M15.4 19.3 L19 22.5 L15.4 25.8" fill="none" stroke="#5e2a10" stroke-width="1.5"/></svg>
<div class="a" style="left:435.5px;top:970.5px;font-family:'Liberation Sans';font-size:18px;line-height:24px;color:#6e6e6e">@</div>
<svg class="a" style="left:0;top:0;overflow:visible" width="1" height="1"><rect x="469.5" y="197" width="11.5" height="12" fill="#fff" stroke="#c8c8c8" stroke-width="1.4"/><path d="M472 203 H478 M475 200 V206" stroke="#c8c8c8" stroke-width="1.2"/><path d="M469.5 258 H480.5 V267 L475 272.3 L469.5 267 Z" fill="#fff" stroke="#c8c8c8" stroke-width="1.4"/><path d="M472 262.5 H478" stroke="#c8c8c8" stroke-width="1.4"/><path d="M469.5 329 H480.5 V320 L475 314.7 L469.5 320 Z" fill="#fff" stroke="#c8c8c8" stroke-width="1.4"/><path d="M472 324.5 H478" stroke="#c8c8c8" stroke-width="1.4"/><path d="M469.5 558 H480.5 V567 L475 572.3 L469.5 567 Z" fill="#fff" stroke="#c8c8c8" stroke-width="1.4"/><path d="M472 562.5 H478" stroke="#c8c8c8" stroke-width="1.4"/><path d="M469.5 869 H480.5 V860 L475 854.7 L469.5 860 Z" fill="#fff" stroke="#c8c8c8" stroke-width="1.4"/><path d="M472 864.5 H478" stroke="#c8c8c8" stroke-width="1.4"/><path d="M469.5 979 H480.5 V988 L475 993.3 L469.5 988 Z" fill="#fff" stroke="#c8c8c8" stroke-width="1.4"/><path d="M472 983.5 H478" stroke="#c8c8c8" stroke-width="1.4"/></svg>
<div class="a" style="left:1513px;top:151px;width:14px;height:231px;background:#e0e0e0;border:1px solid #d0d0d0"></div>
<div class="a" style="left:1510px;top:130.5px;width:15px;height:14.5px;background:#e8c400"></div>
<div class="a" style="left:1508px;top:166.5px;width:19.5px;height:3px;background:#e3c31c"></div>
<div class="a" style="left:1508px;top:215.5px;width:19.5px;height:3px;background:#e3c31c"></div>
<div class="a" style="left:1508px;top:223.5px;width:19.5px;height:3px;background:#e3c31c"></div>
<div class="a" style="left:1508px;top:232.5px;width:19.5px;height:3px;background:#e3c31c"></div>
<div class="a" style="left:1508px;top:394.5px;width:19.5px;height:3px;background:#e3c31c"></div>
<div class="a" style="left:1508px;top:418.5px;width:19.5px;height:3px;background:#e3c31c"></div>
<div class="a" style="left:1508px;top:736.7px;width:19.5px;height:3px;background:#e3c31c"></div>
<div class="a" style="left:1508px;top:785.1px;width:19.5px;height:3px;background:#e3c31c"></div>
<div class="a" style="left:1508px;top:849.5px;width:19.5px;height:3px;background:#e3c31c"></div>
<div class="a" style="left:1508px;top:866.0px;width:19.5px;height:3px;background:#e3c31c"></div>
<div class="a" style="left:1528px;top:87px;width:2px;height:901px;background:#d8d8d8"></div>
<div class="a" style="left:1530px;top:87px;width:390px;height:901px;background:#f2f2f2"></div>
<div class="a" style="left:1538.85px;top:94.71px;font-family:'Liberation Sans',sans-serif;font-size:19.6px;line-height:25px;color:#1a1a1a;transform:scaleX(0.9537);transform-origin:0 0">Device File Explorer</div>
<svg class="a" style="left:0;top:0;overflow:visible" width="1" height="1"><path d="M1862.08 100.44 L1862.82 97.55 L1867.18 97.55 L1867.92 100.44 L1869.22 101.19 L1872.09 100.38 L1874.28 104.16 L1872.14 106.25 L1872.14 107.75 L1874.28 109.84 L1872.09 113.62 L1869.22 112.81 L1867.92 113.56 L1867.18 116.45 L1862.82 116.45 L1862.08 113.56 L1860.78 112.81 L1857.91 113.62 L1855.72 109.84 L1857.86 107.75 L1857.86 106.25 L1855.72 104.16 L1857.91 100.38 L1860.78 101.19 Z" fill="#6e6e6e" stroke="#6e6e6e" stroke-width="0.6" stroke-linejoin="round"/><circle cx="1865" cy="107" r="3.30" fill="#f2f2f2"/></svg>
<div class="a" style="left:1895px;top:105.6px;width:18px;height:2.5px;background:#6e6e6e"></div>
<div class="a" style="left:1535.5px;top:133px;width:380.5px;height:38.5px;background:#fff;border:1px solid #cdcdcd;border-radius:3px"></div>
<svg class="a" style="left:1549px;top:143px" width="14" height="20" viewBox="0 0 14 20"><rect x="2" y="2" width="9.6" height="16" rx="1" fill="none" stroke="#9aa7b0" stroke-width="2.2"/></svg>
<div class="a" style="left:1572.06px;top:139.71px;font-family:'Liberation Sans',sans-serif;font-size:19.6px;line-height:25px;color:#1a1a1a;transform:scaleX(0.9421);transform-origin:0 0">HUAWEI BLN-AL30</div>
<div class="a" style="left:1742.50px;top:139.71px;font-family:'Liberation Sans',sans-serif;font-size:19.6px;line-height:25px;color:#8c8c8c;transform:scaleX(0.9770);transform-origin:0 0">Android 7.0, API</div>
<svg class="a" style="left:1893px;top:149.5px" width="13" height="8" viewBox="0 0 13 8"><path d="M0 0 H12.5 L6.25 7.4 Z" fill="#6e6e6e"/></svg>
<div class="a" style="left:1530px;top:177px;width:390px;height:1.5px;background:#dadada"></div>
<div class="a" style="left:1530px;top:179.5px;width:390px;height:783px;background:#fff"></div>
<div class="a" style="left:1530px;top:215.5px;width:375px;height:1px;background:#e6e6e6"></div>
<div class="a" style="left:1540.92px;top:186.51px;font-family:'Liberation Sans',sans-serif;font-size:19.6px;line-height:25px;color:#1a1a1a;transform:scaleX(0.9831);transform-origin:0 0">Name</div>
<div class="a" style="left:1725.10px;top:186.51px;font-family:'Liberation Sans',sans-serif;font-size:19.6px;line-height:25px;color:#1a1a1a;transform:scaleX(0.9008);transform-origin:0 0">Per...</div>
<div class="a" style="left:1784.02px;top:186.51px;font-family:'Liberation Sans',sans-serif;font-size:19.6px;line-height:25px;color:#1a1a1a;transform:scaleX(0.9755);transform-origin:0 0">Date</div>
<div class="a" style="left:1869.00px;top:186.51px;font-family:'Liberation Sans',sans-serif;font-size:19.6px;line-height:25px;color:#1a1a1a;transform:scaleX(0.7869);transform-origin:0 0">S...</div>
<div class="a" style="left:1714.2px;top:183px;width:1.3px;height:30px;background:#d6d6d6"></div>
<div class="a" style="left:1773.1000000000001px;top:183px;width:1.3px;height:30px;background:#d6d6d6"></div>
<div class="a" style="left:1858.4px;top:183px;width:1.3px;height:30px;background:#d6d6d6"></div>
<svg class="a" style="left:1536px;top:226.8px" width="12" height="14" viewBox="0 0 12 14"><path d="M0 0 L11.5 6.8 L0 13.6 Z" fill="#a5a5a5"/></svg>
<svg class="a" style="left:1560.5px;top:225px" width="21" height="16" viewBox="0 0 21 16"><path d="M0 0 H8 L10.5 3 H21 V16 H0 Z" fill="#a2adb6"/></svg>
<div class="a" style="left:1530px;top:218px;width:184px;height:30px;overflow:hidden"><div style="position:absolute;left:-1530px;top:-218px;width:1920px;height:1080px"><div class="a" style="left:1587.70px;top:220.71px;font-family:'Liberation Sans',sans-serif;font-size:19.6px;line-height:25px;color:#1a1a1a">3rdmodem</div></div></div>
<div class="a" style="left:1715px;top:218px;width:58px;height:30px;overflow:hidden"><div style="position:absolute;left:-1715px;top:-218px;width:1920px;height:1080px"><div class="a" style="left:1728.00px;top:220.71px;font-family:'Liberation Sans',sans-serif;font-size:19.6px;line-height:25px;color:#1a1a1a">drwxr-xr-x</div></div></div>
<div class="a" style="left:1785.60px;top:220.71px;font-family:'Liberation Sans',sans-serif;font-size:19.6px;line-height:25px;color:#1a1a1a;transform:scaleX(1.0139);transform-origin:0 0">2020-12</div>
<div class="a" style="left:1860px;top:218px;width:40px;height:30px;overflow:hidden"><div style="position:absolute;left:-1860px;top:-218px;width:1920px;height:1080px"><div class="a" style="left:1871.00px;top:220.71px;font-family:'Liberation Sans',sans-serif;font-size:19.6px;line-height:25px;color:#1a1a1a">40 B</div></div></div>
<svg class="a" style="left:1536px;top:256.8px" width="12" height="14" viewBox="0 0 12 14"><path d="M0 0 L11.5 6.8 L0 13.6 Z" fill="#a5a5a5"/></svg>
<svg class="a" style="left:1560.5px;top:255px" width="21" height="16" viewBox="0 0 21 16"><path d="M0 0 H8 L10.5 3 H21 V16 H0 Z" fill="#a2adb6"/></svg>
<div class="a" style="left:1530px;top:248px;width:184px;height:30px;overflow:hidden"><div style="position:absolute;left:-1530px;top:-248px;width:1920px;height:1080px"><div class="a" style="left:1587.70px;top:250.71px;font-family:'Liberation Sans',sans-serif;font-size:19.6px;line-height:25px;color:#1a1a1a">3rdmodemnvm</div></div></div>
<div class="a" style="left:1715px;top:248px;width:58px;height:30px;overflow:hidden"><div style="position:absolute;left:-1715px;top:-248px;width:1920px;height:1080px"><div class="a" style="left:1728.00px;top:250.71px;font-family:'Liberation Sans',sans-serif;font-size:19.6px;line-height:25px;color:#1a1a1a">drwxr-xr-x</div></div></div>
<div class="a" style="left:1785.60px;top:250.71px;font-family:'Liberation Sans',sans-serif;font-size:19.6px;line-height:25px;color:#1a1a1a;transform:scaleX(1.0139);transform-origin:0 0">2020-12</div>
<div class="a" style="left:1860px;top:248px;width:40px;height:30px;overflow:hidden"><div style="position:absolute;left:-1860px;top:-248px;width:1920px;height:1080px"><div class="a" style="left:1871.00px;top:250.71px;font-family:'Liberation Sans',sans-serif;font-size:19.6px;line-height:25px;color:#1a1a1a">40 B</div></div></div>
<svg class="a" style="left:1536px;top:286.8px" width="12" height="14" viewBox="0 0 12 14"><path d="M0 0 L11.5 6.8 L0 13.6 Z" fill="#a5a5a5"/></svg>
<svg class="a" style="left:1560.5px;top:285px" width="21" height="16" viewBox="0 0 21 16"><path d="M0 0 H8 L10.5 3 H21 V16 H0 Z" fill="#a2adb6"/></svg>
<div class="a" style="left:1530px;top:278px;width:184px;height:30px;overflow:hidden"><div style="position:absolute;left:-1530px;top:-278px;width:1920px;height:1080px"><div class="a" style="left:1587.70px;top:280.71px;font-family:'Liberation Sans',sans-serif;font-size:19.6px;line-height:25px;color:#1a1a1a">3rdmodemnvm</div></div></div>
<div class="a" style="left:1715px;top:278px;width:58px;height:30px;overflow:hidden"><div style="position:absolute;left:-1715px;top:-278px;width:1920px;height:1080px"><div class="a" style="left:1728.00px;top:280.71px;font-family:'Liberation Sans',sans-serif;font-size:19.6px;line-height:25px;color:#1a1a1a">drwxr-xr-x</div></div></div>
<div class="a" style="left:1785.60px;top:280.71px;font-family:'Liberation Sans',sans-serif;font-size:19.6px;line-height:25px;color:#1a1a1a;transform:scaleX(1.0139);transform-origin:0 0">2020-12</div>
<div class="a" style="left:1860px;top:278px;width:40px;height:30px;overflow:hidden"><div style="position:absolute;left:-1860px;top:-278px;width:1920px;height:1080px"><div class="a" style="left:1871.00px;top:280.71px;font-family:'Liberation Sans',sans-serif;font-size:19.6px;line-height:25px;color:#1a1a1a">40 B</div></div></div>
<svg class="a" style="left:1536px;top:316.8px" width="12" height="14" viewBox="0 0 12 14"><path d="M0 0 L11.5 6.8 L0 13.6 Z" fill="#a5a5a5"/></svg>
<svg class="a" style="left:1560.5px;top:315px" width="21" height="16" viewBox="0 0 21 16"><path d="M0 0 H8 L10.5 3 H21 V16 H0 Z" fill="#a2adb6"/></svg>
<div class="a" style="left:1530px;top:308px;width:184px;height:30px;overflow:hidden"><div style="position:absolute;left:-1530px;top:-308px;width:1920px;height:1080px"><div class="a" style="left:1587.70px;top:310.71px;font-family:'Liberation Sans',sans-serif;font-size:19.6px;line-height:25px;color:#1a1a1a">acct</div></div></div>
<div class="a" style="left:1715px;top:308px;width:58px;height:30px;overflow:hidden"><div style="position:absolute;left:-1715px;top:-308px;width:1920px;height:1080px"><div class="a" style="left:1728.00px;top:310.71px;font-family:'Liberation Sans',sans-serif;font-size:19.6px;line-height:25px;color:#1a1a1a">dr-xr-xr-x</div></div></div>
<div class="a" style="left:1785.60px;top:310.71px;font-family:'Liberation Sans',sans-serif;font-size:19.6px;line-height:25px;color:#1a1a1a;transform:scaleX(1.0139);transform-origin:0 0">2020-12</div>
<div class="a" style="left:1860px;top:308px;width:40px;height:30px;overflow:hidden"><div style="position:absolute;left:-1860px;top:-308px;width:1920px;height:1080px"><div class="a" style="left:1871.00px;top:310.71px;font-family:'Liberation Sans',sans-serif;font-size:19.6px;line-height:25px;color:#1a1a1a">0 B</div></div></div>
<svg class="a" style="left:1536px;top:346.8px" width="12" height="14" viewBox="0 0 12 14"><path d="M0 0 L11.5 6.8 L0 13.6 Z" fill="#a5a5a5"/></svg>
<svg class="a" style="left:1560.5px;top:345px" width="21" height="16" viewBox="0 0 21 16"><path d="M0 0 H8 L10.5 3 H21 V16 H0 Z" fill="#a2adb6"/></svg>
<div class="a" style="left:1530px;top:338px;width:184px;height:30px;overflow:hidden"><div style="position:absolute;left:-1530px;top:-338px;width:1920px;height:1080px"><div class="a" style="left:1587.70px;top:340.71px;font-family:'Liberation Sans',sans-serif;font-size:19.6px;line-height:25px;color:#1a1a1a">cache</div></div></div>
<div class="a" style="left:1715px;top:338px;width:58px;height:30px;overflow:hidden"><div style="position:absolute;left:-1715px;top:-338px;width:1920px;height:1080px"><div class="a" style="left:1728.00px;top:340.71px;font-family:'Liberation Sans',sans-serif;font-size:19.6px;line-height:25px;color:#1a1a1a">drwxrwx---</div></div></div>
<div class="a" style="left:1785.60px;top:340.71px;font-family:'Liberation Sans',sans-serif;font-size:19.6px;line-height:25px;color:#1a1a1a;transform:scaleX(1.0139);transform-origin:0 0">2017-09</div>
<div class="a" style="left:1860px;top:338px;width:40px;height:30px;overflow:hidden"><div style="position:absolute;left:-1860px;top:-338px;width:1920px;height:1080px"><div class="a" style="left:1871.00px;top:340.71px;font-family:'Liberation Sans',sans-serif;font-size:19.6px;line-height:25px;color:#1a1a1a">4 KB</div></div></div>
<svg class="a" style="left:1536px;top:376.8px" width="12" height="14" viewBox="0 0 12 14"><path d="M0 0 L11.5 6.8 L0 13.6 Z" fill="#a5a5a5"/></svg>
<svg class="a" style="left:1560.5px;top:375px" width="21" height="16" viewBox="0 0 21 16"><path d="M0 0 H8 L10.5 3 H21 V16 H0 Z" fill="#a2adb6"/></svg>
<div class="a" style="left:1530px;top:368px;width:184px;height:30px;overflow:hidden"><div style="position:absolute;left:-1530px;top:-368px;width:1920px;height:1080px"><div class="a" style="left:1587.70px;top:370.71px;font-family:'Liberation Sans',sans-serif;font-size:19.6px;line-height:25px;color:#1a1a1a">config</div></div></div>
<div class="a" style="left:1715px;top:368px;width:58px;height:30px;overflow:hidden"><div style="position:absolute;left:-1715px;top:-368px;width:1920px;height:1080px"><div class="a" style="left:1728.00px;top:370.71px;font-family:'Liberation Sans',sans-serif;font-size:19.6px;line-height:25px;color:#1a1a1a">drwxr-xr-x</div></div></div>
<div class="a" style="left:1784.57px;top:370.71px;font-family:'Liberation Sans',sans-serif;font-size:19.6px;line-height:25px;color:#1a1a1a;transform:scaleX(1.0284);transform-origin:0 0">1970-01</div>
<div class="a" style="left:1860px;top:368px;width:40px;height:30px;overflow:hidden"><div style="position:absolute;left:-1860px;top:-368px;width:1920px;height:1080px"><div class="a" style="left:1871.00px;top:370.71px;font-family:'Liberation Sans',sans-serif;font-size:19.6px;line-height:25px;color:#1a1a1a">0 B</div></div></div>
<svg class="a" style="left:1536px;top:406.8px" width="12" height="14" viewBox="0 0 12 14"><path d="M0 0 L11.5 6.8 L0 13.6 Z" fill="#a5a5a5"/></svg>
<svg class="a" style="left:1560.5px;top:405px" width="21" height="16" viewBox="0 0 21 16"><path d="M0 0 H8 L10.5 3 H21 V16 H0 Z" fill="#a2adb6"/></svg>
<div class="a" style="left:1530px;top:398px;width:184px;height:30px;overflow:hidden"><div style="position:absolute;left:-1530px;top:-398px;width:1920px;height:1080px"><div class="a" style="left:1587.70px;top:400.71px;font-family:'Liberation Sans',sans-serif;font-size:19.6px;line-height:25px;color:#1a1a1a">cust</div></div></div>
<div class="a" style="left:1715px;top:398px;width:58px;height:30px;overflow:hidden"><div style="position:absolute;left:-1715px;top:-398px;width:1920px;height:1080px"><div class="a" style="left:1728.00px;top:400.71px;font-family:'Liberation Sans',sans-serif;font-size:19.6px;line-height:25px;color:#1a1a1a">drwxr-xr-x</div></div></div>
<div class="a" style="left:1784.57px;top:400.71px;font-family:'Liberation Sans',sans-serif;font-size:19.6px;line-height:25px;color:#1a1a1a;transform:scaleX(1.0284);transform-origin:0 0">1970-01</div>
<div class="a" style="left:1860px;top:398px;width:40px;height:30px;overflow:hidden"><div style="position:absolute;left:-1860px;top:-398px;width:1920px;height:1080px"><div class="a" style="left:1871.00px;top:400.71px;font-family:'Liberation Sans',sans-serif;font-size:19.6px;line-height:25px;color:#1a1a1a">4 KB</div></div></div>
<svg class="a" style="left:1536px;top:436.8px" width="12" height="14" viewBox="0 0 12 14"><path d="M0 0 L11.5 6.8 L0 13.6 Z" fill="#a5a5a5"/></svg>
<svg class="a" style="left:1560.5px;top:435px;overflow:visible" width="22" height="16" viewBox="0 0 22 16"><path d="M0 0 H8 L10.5 3 H21 V16 H0 Z" fill="#a2adb6"/><rect x="12.8" y="-2.8" width="9.5" height="9.4" fill="#8e99a2"/><path d="M14.6 5 L20.2 -0.6" stroke="#3a3a3a" stroke-width="1.5"/><path d="M15.8 -1.5 H21 V3.7" fill="none" stroke="#3a3a3a" stroke-width="1.5"/></svg>
<div class="a" style="left:1530px;top:428px;width:184px;height:30px;overflow:hidden"><div style="position:absolute;left:-1530px;top:-428px;width:1920px;height:1080px"><div class="a" style="left:1587.70px;top:430.71px;font-family:'Liberation Sans',sans-serif;font-size:19.6px;line-height:25px;color:#1a1a1a">cust_comm</div></div></div>
<div class="a" style="left:1715px;top:428px;width:58px;height:30px;overflow:hidden"><div style="position:absolute;left:-1715px;top:-428px;width:1920px;height:1080px"><div class="a" style="left:1727.00px;top:430.71px;font-family:'Liberation Sans',sans-serif;font-size:19.6px;line-height:25px;color:#1a1a1a">lrwxrwxrwx</div></div></div>
<div class="a" style="left:1785.60px;top:430.71px;font-family:'Liberation Sans',sans-serif;font-size:19.6px;line-height:25px;color:#1a1a1a;transform:scaleX(1.0139);transform-origin:0 0">2020-12</div>
<div class="a" style="left:1860px;top:428px;width:40px;height:30px;overflow:hidden"><div style="position:absolute;left:-1860px;top:-428px;width:1920px;height:1080px"><div class="a" style="left:1870.00px;top:430.71px;font-family:'Liberation Sans',sans-serif;font-size:19.6px;line-height:25px;color:#1a1a1a">12 B</div></div></div>
<svg class="a" style="left:1536px;top:466.8px" width="12" height="14" viewBox="0 0 12 14"><path d="M0 0 L11.5 6.8 L0 13.6 Z" fill="#a5a5a5"/></svg>
<svg class="a" style="left:1560.5px;top:465px;overflow:visible" width="22" height="16" viewBox="0 0 22 16"><path d="M0 0 H8 L10.5 3 H21 V16 H0 Z" fill="#a2adb6"/><rect x="12.8" y="-2.8" width="9.5" height="9.4" fill="#8e99a2"/><path d="M14.6 5 L20.2 -0.6" stroke="#3a3a3a" stroke-width="1.5"/><path d="M15.8 -1.5 H21 V3.7" fill="none" stroke="#3a3a3a" stroke-width="1.5"/></svg>
<div class="a" style="left:1530px;top:458px;width:184px;height:30px;overflow:hidden"><div style="position:absolute;left:-1530px;top:-458px;width:1920px;height:1080px"><div class="a" style="left:1587.70px;top:460.71px;font-family:'Liberation Sans',sans-serif;font-size:19.6px;line-height:25px;color:#1a1a1a">cust_spec</div></div></div>
<div class="a" style="left:1715px;top:458px;width:58px;height:30px;overflow:hidden"><div style="position:absolute;left:-1715px;top:-458px;width:1920px;height:1080px"><div class="a" style="left:1727.00px;top:460.71px;font-family:'Liberation Sans',sans-serif;font-size:19.6px;line-height:25px;color:#1a1a1a">lrwxrwxrwx</div></div></div>
<div class="a" style="left:1785.60px;top:460.71px;font-family:'Liberation Sans',sans-serif;font-size:19.6px;line-height:25px;color:#1a1a1a;transform:scaleX(1.0139);transform-origin:0 0">2020-12</div>
<div class="a" style="left:1860px;top:458px;width:40px;height:30px;overflow:hidden"><div style="position:absolute;left:-1860px;top:-458px;width:1920px;height:1080px"><div class="a" style="left:1871.00px;top:460.71px;font-family:'Liberation Sans',sans-serif;font-size:19.6px;line-height:25px;color:#1a1a1a">37 B</div></div></div>
<svg class="a" style="left:1536px;top:496.8px" width="12" height="14" viewBox="0 0 12 14"><path d="M0 0 L11.5 6.8 L0 13.6 Z" fill="#a5a5a5"/></svg>
<svg class="a" style="left:1560.5px;top:495px;overflow:visible" width="22" height="16" viewBox="0 0 22 16"><path d="M0 0 H8 L10.5 3 H21 V16 H0 Z" fill="#a2adb6"/><rect x="12.8" y="-2.8" width="9.5" height="9.4" fill="#8e99a2"/><path d="M14.6 5 L20.2 -0.6" stroke="#3a3a3a" stroke-width="1.5"/><path d="M15.8 -1.5 H21 V3.7" fill="none" stroke="#3a3a3a" stroke-width="1.5"/></svg>
<div class="a" style="left:1530px;top:488px;width:184px;height:30px;overflow:hidden"><div style="position:absolute;left:-1530px;top:-488px;width:1920px;height:1080px"><div class="a" style="left:1587.70px;top:490.71px;font-family:'Liberation Sans',sans-serif;font-size:19.6px;line-height:25px;color:#1a1a1a">d</div></div></div>
<div class="a" style="left:1715px;top:488px;width:58px;height:30px;overflow:hidden"><div style="position:absolute;left:-1715px;top:-488px;width:1920px;height:1080px"><div class="a" style="left:1727.00px;top:490.71px;font-family:'Liberation Sans',sans-serif;font-size:19.6px;line-height:25px;color:#1a1a1a">lrwxrwxrwx</div></div></div>
<div class="a" style="left:1784.57px;top:490.71px;font-family:'Liberation Sans',sans-serif;font-size:19.6px;line-height:25px;color:#1a1a1a;transform:scaleX(1.0284);transform-origin:0 0">1970-01</div>
<div class="a" style="left:1860px;top:488px;width:40px;height:30px;overflow:hidden"><div style="position:absolute;left:-1860px;top:-488px;width:1920px;height:1080px"><div class="a" style="left:1870.00px;top:490.71px;font-family:'Liberation Sans',sans-serif;font-size:19.6px;line-height:25px;color:#1a1a1a">17 B</div></div></div>
<svg class="a" style="left:1536px;top:526.8px" width="12" height="14" viewBox="0 0 12 14"><path d="M0 0 L11.5 6.8 L0 13.6 Z" fill="#a5a5a5"/></svg>
<svg class="a" style="left:1560.5px;top:525px" width="21" height="16" viewBox="0 0 21 16"><path d="M0 0 H8 L10.5 3 H21 V16 H0 Z" fill="#a2adb6"/></svg>
<div class="a" style="left:1530px;top:518px;width:184px;height:30px;overflow:hidden"><div style="position:absolute;left:-1530px;top:-518px;width:1920px;height:1080px"><div class="a" style="left:1587.70px;top:520.71px;font-family:'Liberation Sans',sans-serif;font-size:19.6px;line-height:25px;color:#1a1a1a">data</div></div></div>
<div class="a" style="left:1715px;top:518px;width:58px;height:30px;overflow:hidden"><div style="position:absolute;left:-1715px;top:-518px;width:1920px;height:1080px"><div class="a" style="left:1728.00px;top:520.71px;font-family:'Liberation Sans',sans-serif;font-size:19.6px;line-height:25px;color:#1a1a1a">drwxrwx--x</div></div></div>
<div class="a" style="left:1785.60px;top:520.71px;font-family:'Liberation Sans',sans-serif;font-size:19.6px;line-height:25px;color:#1a1a1a;transform:scaleX(1.0139);transform-origin:0 0">2020-12</div>
<div class="a" style="left:1860px;top:518px;width:40px;height:30px;overflow:hidden"><div style="position:absolute;left:-1860px;top:-518px;width:1920px;height:1080px"><div class="a" style="left:1871.00px;top:520.71px;font-family:'Liberation Sans',sans-serif;font-size:19.6px;line-height:25px;color:#1a1a1a">4 KB</div></div></div>
<svg class="a" style="left:1536px;top:556.8px" width="12" height="14" viewBox="0 0 12 14"><path d="M0 0 L11.5 6.8 L0 13.6 Z" fill="#a5a5a5"/></svg>
<svg class="a" style="left:1560.5px;top:555px" width="21" height="16" viewBox="0 0 21 16"><path d="M0 0 H8 L10.5 3 H21 V16 H0 Z" fill="#a2adb6"/></svg>
<div class="a" style="left:1530px;top:548px;width:184px;height:30px;overflow:hidden"><div style="position:absolute;left:-1530px;top:-548px;width:1920px;height:1080px"><div class="a" style="left:1587.70px;top:550.71px;font-family:'Liberation Sans',sans-serif;font-size:19.6px;line-height:25px;color:#1a1a1a">dev</div></div></div>
<div class="a" style="left:1715px;top:548px;width:58px;height:30px;overflow:hidden"><div style="position:absolute;left:-1715px;top:-548px;width:1920px;height:1080px"><div class="a" style="left:1728.00px;top:550.71px;font-family:'Liberation Sans',sans-serif;font-size:19.6px;line-height:25px;color:#1a1a1a">drwxr-xr-x</div></div></div>
<div class="a" style="left:1785.60px;top:550.71px;font-family:'Liberation Sans',sans-serif;font-size:19.6px;line-height:25px;color:#1a1a1a;transform:scaleX(1.0139);transform-origin:0 0">2020-12</div>
<div class="a" style="left:1860px;top:548px;width:40px;height:30px;overflow:hidden"><div style="position:absolute;left:-1860px;top:-548px;width:1920px;height:1080px"><div class="a" style="left:1871.00px;top:550.71px;font-family:'Liberation Sans',sans-serif;font-size:19.6px;line-height:25px;color:#1a1a1a">3.2 KB</div></div></div>
<svg class="a" style="left:1536px;top:586.8px" width="12" height="14" viewBox="0 0 12 14"><path d="M0 0 L11.5 6.8 L0 13.6 Z" fill="#a5a5a5"/></svg>
<svg class="a" style="left:1560.5px;top:585px" width="21" height="16" viewBox="0 0 21 16"><path d="M0 0 H8 L10.5 3 H21 V16 H0 Z" fill="#a2adb6"/></svg>
<div class="a" style="left:1530px;top:578px;width:184px;height:30px;overflow:hidden"><div style="position:absolute;left:-1530px;top:-578px;width:1920px;height:1080px"><div class="a" style="left:1587.70px;top:580.71px;font-family:'Liberation Sans',sans-serif;font-size:19.6px;line-height:25px;color:#1a1a1a">dload</div></div></div>
<div class="a" style="left:1715px;top:578px;width:58px;height:30px;overflow:hidden"><div style="position:absolute;left:-1715px;top:-578px;width:1920px;height:1080px"><div class="a" style="left:1728.00px;top:580.71px;font-family:'Liberation Sans',sans-serif;font-size:19.6px;line-height:25px;color:#1a1a1a">drwxr-xr-x</div></div></div>
<div class="a" style="left:1784.57px;top:580.71px;font-family:'Liberation Sans',sans-serif;font-size:19.6px;line-height:25px;color:#1a1a1a;transform:scaleX(1.0284);transform-origin:0 0">1970-01</div>
<div class="a" style="left:1860px;top:578px;width:40px;height:30px;overflow:hidden"><div style="position:absolute;left:-1860px;top:-578px;width:1920px;height:1080px"><div class="a" style="left:1871.00px;top:580.71px;font-family:'Liberation Sans',sans-serif;font-size:19.6px;line-height:25px;color:#1a1a1a">40 B</div></div></div>
<svg class="a" style="left:1536px;top:616.8px" width="12" height="14" viewBox="0 0 12 14"><path d="M0 0 L11.5 6.8 L0 13.6 Z" fill="#a5a5a5"/></svg>
<svg class="a" style="left:1560.5px;top:615px;overflow:visible" width="22" height="16" viewBox="0 0 22 16"><path d="M0 0 H8 L10.5 3 H21 V16 H0 Z" fill="#a2adb6"/><rect x="12.8" y="-2.8" width="9.5" height="9.4" fill="#8e99a2"/><path d="M14.6 5 L20.2 -0.6" stroke="#3a3a3a" stroke-width="1.5"/><path d="M15.8 -1.5 H21 V3.7" fill="none" stroke="#3a3a3a" stroke-width="1.5"/></svg>
<div class="a" style="left:1530px;top:608px;width:184px;height:30px;overflow:hidden"><div style="position:absolute;left:-1530px;top:-608px;width:1920px;height:1080px"><div class="a" style="left:1587.70px;top:610.71px;font-family:'Liberation Sans',sans-serif;font-size:19.6px;line-height:25px;color:#1a1a1a">etc</div></div></div>
<div class="a" style="left:1715px;top:608px;width:58px;height:30px;overflow:hidden"><div style="position:absolute;left:-1715px;top:-608px;width:1920px;height:1080px"><div class="a" style="left:1727.00px;top:610.71px;font-family:'Liberation Sans',sans-serif;font-size:19.6px;line-height:25px;color:#1a1a1a">lrwxrwxrwx</div></div></div>
<div class="a" style="left:1784.57px;top:610.71px;font-family:'Liberation Sans',sans-serif;font-size:19.6px;line-height:25px;color:#1a1a1a;transform:scaleX(1.0284);transform-origin:0 0">1970-01</div>
<div class="a" style="left:1860px;top:608px;width:40px;height:30px;overflow:hidden"><div style="position:absolute;left:-1860px;top:-608px;width:1920px;height:1080px"><div class="a" style="left:1870.00px;top:610.71px;font-family:'Liberation Sans',sans-serif;font-size:19.6px;line-height:25px;color:#1a1a1a">11 B</div></div></div>
<svg class="a" style="left:1536px;top:646.8px" width="12" height="14" viewBox="0 0 12 14"><path d="M0 0 L11.5 6.8 L0 13.6 Z" fill="#a5a5a5"/></svg>
<svg class="a" style="left:1560.5px;top:645px;overflow:visible" width="22" height="16" viewBox="0 0 22 16"><path d="M0 0 H8 L10.5 3 H21 V16 H0 Z" fill="#a2adb6"/><rect x="12.8" y="-2.8" width="9.5" height="9.4" fill="#8e99a2"/><path d="M14.6 5 L20.2 -0.6" stroke="#3a3a3a" stroke-width="1.5"/><path d="M15.8 -1.5 H21 V3.7" fill="none" stroke="#3a3a3a" stroke-width="1.5"/></svg>
<div class="a" style="left:1530px;top:638px;width:184px;height:30px;overflow:hidden"><div style="position:absolute;left:-1530px;top:-638px;width:1920px;height:1080px"><div class="a" style="left:1586.70px;top:640.71px;font-family:'Liberation Sans',sans-serif;font-size:19.6px;line-height:25px;color:#1a1a1a">hw_oem</div></div></div>
<div class="a" style="left:1715px;top:638px;width:58px;height:30px;overflow:hidden"><div style="position:absolute;left:-1715px;top:-638px;width:1920px;height:1080px"><div class="a" style="left:1727.00px;top:640.71px;font-family:'Liberation Sans',sans-serif;font-size:19.6px;line-height:25px;color:#1a1a1a">lrwxrwxrwx</div></div></div>
<div class="a" style="left:1785.60px;top:640.71px;font-family:'Liberation Sans',sans-serif;font-size:19.6px;line-height:25px;color:#1a1a1a;transform:scaleX(1.0139);transform-origin:0 0">2020-12</div>
<div class="a" style="left:1860px;top:638px;width:40px;height:30px;overflow:hidden"><div style="position:absolute;left:-1860px;top:-638px;width:1920px;height:1080px"><div class="a" style="left:1871.00px;top:640.71px;font-family:'Liberation Sans',sans-serif;font-size:19.6px;line-height:25px;color:#1a1a1a">24 B</div></div></div>
<svg class="a" style="left:1536px;top:676.8px" width="12" height="14" viewBox="0 0 12 14"><path d="M0 0 L11.5 6.8 L0 13.6 Z" fill="#a5a5a5"/></svg>
<svg class="a" style="left:1560.5px;top:675px;overflow:visible" width="22" height="16" viewBox="0 0 22 16"><path d="M0 0 H8 L10.5 3 H21 V16 H0 Z" fill="#a2adb6"/><rect x="12.8" y="-2.8" width="9.5" height="9.4" fill="#8e99a2"/><path d="M14.6 5 L20.2 -0.6" stroke="#3a3a3a" stroke-width="1.5"/><path d="M15.8 -1.5 H21 V3.7" fill="none" stroke="#3a3a3a" stroke-width="1.5"/></svg>
<div class="a" style="left:1530px;top:668px;width:184px;height:30px;overflow:hidden"><div style="position:absolute;left:-1530px;top:-668px;width:1920px;height:1080px"><div class="a" style="left:1586.70px;top:670.71px;font-family:'Liberation Sans',sans-serif;font-size:19.6px;line-height:25px;color:#1a1a1a">log</div></div></div>
<div class="a" style="left:1715px;top:668px;width:58px;height:30px;overflow:hidden"><div style="position:absolute;left:-1715px;top:-668px;width:1920px;height:1080px"><div class="a" style="left:1727.00px;top:670.71px;font-family:'Liberation Sans',sans-serif;font-size:19.6px;line-height:25px;color:#1a1a1a">lrwxrwxrwx</div></div></div>
<div class="a" style="left:1785.60px;top:670.71px;font-family:'Liberation Sans',sans-serif;font-size:19.6px;line-height:25px;color:#1a1a1a;transform:scaleX(1.0139);transform-origin:0 0">2020-12</div>
<div class="a" style="left:1860px;top:668px;width:40px;height:30px;overflow:hidden"><div style="position:absolute;left:-1860px;top:-668px;width:1920px;height:1080px"><div class="a" style="left:1871.00px;top:670.71px;font-family:'Liberation Sans',sans-serif;font-size:19.6px;line-height:25px;color:#1a1a1a">8 B</div></div></div>
<svg class="a" style="left:1536px;top:706.8px" width="12" height="14" viewBox="0 0 12 14"><path d="M0 0 L11.5 6.8 L0 13.6 Z" fill="#a5a5a5"/></svg>
<svg class="a" style="left:1560.5px;top:705px" width="21" height="16" viewBox="0 0 21 16"><path d="M0 0 H8 L10.5 3 H21 V16 H0 Z" fill="#a2adb6"/></svg>
<div class="a" style="left:1530px;top:698px;width:184px;height:30px;overflow:hidden"><div style="position:absolute;left:-1530px;top:-698px;width:1920px;height:1080px"><div class="a" style="left:1586.70px;top:700.71px;font-family:'Liberation Sans',sans-serif;font-size:19.6px;line-height:25px;color:#1a1a1a">mnt</div></div></div>
<div class="a" style="left:1715px;top:698px;width:58px;height:30px;overflow:hidden"><div style="position:absolute;left:-1715px;top:-698px;width:1920px;height:1080px"><div class="a" style="left:1728.00px;top:700.71px;font-family:'Liberation Sans',sans-serif;font-size:19.6px;line-height:25px;color:#1a1a1a">drwxr-xr-x</div></div></div>
<div class="a" style="left:1785.60px;top:700.71px;font-family:'Liberation Sans',sans-serif;font-size:19.6px;line-height:25px;color:#1a1a1a;transform:scaleX(1.0139);transform-origin:0 0">2020-12</div>
<div class="a" style="left:1860px;top:698px;width:40px;height:30px;overflow:hidden"><div style="position:absolute;left:-1860px;top:-698px;width:1920px;height:1080px"><div class="a" style="left:1871.00px;top:700.71px;font-family:'Liberation Sans',sans-serif;font-size:19.6px;line-height:25px;color:#1a1a1a">220 B</div></div></div>
<svg class="a" style="left:1536px;top:736.8px" width="12" height="14" viewBox="0 0 12 14"><path d="M0 0 L11.5 6.8 L0 13.6 Z" fill="#a5a5a5"/></svg>
<svg class="a" style="left:1560.5px;top:735px" width="21" height="16" viewBox="0 0 21 16"><path d="M0 0 H8 L10.5 3 H21 V16 H0 Z" fill="#a2adb6"/></svg>
<div class="a" style="left:1530px;top:728px;width:184px;height:30px;overflow:hidden"><div style="position:absolute;left:-1530px;top:-728px;width:1920px;height:1080px"><div class="a" style="left:1587.70px;top:730.71px;font-family:'Liberation Sans',sans-serif;font-size:19.6px;line-height:25px;color:#1a1a1a">odm</div></div></div>
<div class="a" style="left:1715px;top:728px;width:58px;height:30px;overflow:hidden"><div style="position:absolute;left:-1715px;top:-728px;width:1920px;height:1080px"><div class="a" style="left:1728.00px;top:730.71px;font-family:'Liberation Sans',sans-serif;font-size:19.6px;line-height:25px;color:#1a1a1a">drwxr-xr-x</div></div></div>
<div class="a" style="left:1784.57px;top:730.71px;font-family:'Liberation Sans',sans-serif;font-size:19.6px;line-height:25px;color:#1a1a1a;transform:scaleX(1.0284);transform-origin:0 0">1970-01</div>
<div class="a" style="left:1860px;top:728px;width:40px;height:30px;overflow:hidden"><div style="position:absolute;left:-1860px;top:-728px;width:1920px;height:1080px"><div class="a" style="left:1870.00px;top:730.71px;font-family:'Liberation Sans',sans-serif;font-size:19.6px;line-height:25px;color:#1a1a1a">60 B</div></div></div>
<svg class="a" style="left:1536px;top:766.8px" width="12" height="14" viewBox="0 0 12 14"><path d="M0 0 L11.5 6.8 L0 13.6 Z" fill="#a5a5a5"/></svg>
<svg class="a" style="left:1560.5px;top:765px" width="21" height="16" viewBox="0 0 21 16"><path d="M0 0 H8 L10.5 3 H21 V16 H0 Z" fill="#a2adb6"/></svg>
<div class="a" style="left:1530px;top:758px;width:184px;height:30px;overflow:hidden"><div style="position:absolute;left:-1530px;top:-758px;width:1920px;height:1080px"><div class="a" style="left:1587.70px;top:760.71px;font-family:'Liberation Sans',sans-serif;font-size:19.6px;line-height:25px;color:#1a1a1a">oem</div></div></div>
<div class="a" style="left:1715px;top:758px;width:58px;height:30px;overflow:hidden"><div style="position:absolute;left:-1715px;top:-758px;width:1920px;height:1080px"><div class="a" style="left:1728.00px;top:760.71px;font-family:'Liberation Sans',sans-serif;font-size:19.6px;line-height:25px;color:#1a1a1a">drwxr-xr-x</div></div></div>
<div class="a" style="left:1784.57px;top:760.71px;font-family:'Liberation Sans',sans-serif;font-size:19.6px;line-height:25px;color:#1a1a1a;transform:scaleX(1.0284);transform-origin:0 0">1970-01</div>
<div class="a" style="left:1860px;top:758px;width:40px;height:30px;overflow:hidden"><div style="position:absolute;left:-1860px;top:-758px;width:1920px;height:1080px"><div class="a" style="left:1871.00px;top:760.71px;font-family:'Liberation Sans',sans-serif;font-size:19.6px;line-height:25px;color:#1a1a1a">40 B</div></div></div>
<svg class="a" style="left:1536px;top:796.8px" width="12" height="14" viewBox="0 0 12 14"><path d="M0 0 L11.5 6.8 L0 13.6 Z" fill="#a5a5a5"/></svg>
<svg class="a" style="left:1560.5px;top:795px" width="21" height="16" viewBox="0 0 21 16"><path d="M0 0 H8 L10.5 3 H21 V16 H0 Z" fill="#a2adb6"/></svg>
<div class="a" style="left:1530px;top:788px;width:184px;height:30px;overflow:hidden"><div style="position:absolute;left:-1530px;top:-788px;width:1920px;height:1080px"><div class="a" style="left:1586.70px;top:790.71px;font-family:'Liberation Sans',sans-serif;font-size:19.6px;line-height:25px;color:#1a1a1a">patch</div></div></div>
<div class="a" style="left:1715px;top:788px;width:58px;height:30px;overflow:hidden"><div style="position:absolute;left:-1715px;top:-788px;width:1920px;height:1080px"><div class="a" style="left:1728.00px;top:790.71px;font-family:'Liberation Sans',sans-serif;font-size:19.6px;line-height:25px;color:#1a1a1a">drwxr-xr-x</div></div></div>
<div class="a" style="left:1784.57px;top:790.71px;font-family:'Liberation Sans',sans-serif;font-size:19.6px;line-height:25px;color:#1a1a1a;transform:scaleX(1.0284);transform-origin:0 0">1970-01</div>
<div class="a" style="left:1860px;top:788px;width:40px;height:30px;overflow:hidden"><div style="position:absolute;left:-1860px;top:-788px;width:1920px;height:1080px"><div class="a" style="left:1870.00px;top:790.71px;font-family:'Liberation Sans',sans-serif;font-size:19.6px;line-height:25px;color:#1a1a1a">120 B</div></div></div>
<svg class="a" style="left:1536px;top:826.8px" width="12" height="14" viewBox="0 0 12 14"><path d="M0 0 L11.5 6.8 L0 13.6 Z" fill="#a5a5a5"/></svg>
<svg class="a" style="left:1560.5px;top:825px" width="21" height="16" viewBox="0 0 21 16"><path d="M0 0 H8 L10.5 3 H21 V16 H0 Z" fill="#a2adb6"/></svg>
<div class="a" style="left:1530px;top:818px;width:184px;height:30px;overflow:hidden"><div style="position:absolute;left:-1530px;top:-818px;width:1920px;height:1080px"><div class="a" style="left:1586.70px;top:820.71px;font-family:'Liberation Sans',sans-serif;font-size:19.6px;line-height:25px;color:#1a1a1a">proc</div></div></div>
<div class="a" style="left:1715px;top:818px;width:58px;height:30px;overflow:hidden"><div style="position:absolute;left:-1715px;top:-818px;width:1920px;height:1080px"><div class="a" style="left:1728.00px;top:820.71px;font-family:'Liberation Sans',sans-serif;font-size:19.6px;line-height:25px;color:#1a1a1a">dr-xr-xr-x</div></div></div>
<div class="a" style="left:1784.57px;top:820.71px;font-family:'Liberation Sans',sans-serif;font-size:19.6px;line-height:25px;color:#1a1a1a;transform:scaleX(1.0284);transform-origin:0 0">1970-01</div>
<div class="a" style="left:1860px;top:818px;width:40px;height:30px;overflow:hidden"><div style="position:absolute;left:-1860px;top:-818px;width:1920px;height:1080px"><div class="a" style="left:1871.00px;top:820.71px;font-family:'Liberation Sans',sans-serif;font-size:19.6px;line-height:25px;color:#1a1a1a">0 B</div></div></div>
<svg class="a" style="left:1536px;top:856.8px" width="12" height="14" viewBox="0 0 12 14"><path d="M0 0 L11.5 6.8 L0 13.6 Z" fill="#a5a5a5"/></svg>
<svg class="a" style="left:1560.5px;top:855px" width="21" height="16" viewBox="0 0 21 16"><path d="M0 0 H8 L10.5 3 H21 V16 H0 Z" fill="#a2adb6"/></svg>
<div class="a" style="left:1530px;top:848px;width:184px;height:30px;overflow:hidden"><div style="position:absolute;left:-1530px;top:-848px;width:1920px;height:1080px"><div class="a" style="left:1586.70px;top:850.71px;font-family:'Liberation Sans',sans-serif;font-size:19.6px;line-height:25px;color:#1a1a1a">product</div></div></div>
<div class="a" style="left:1715px;top:848px;width:58px;height:30px;overflow:hidden"><div style="position:absolute;left:-1715px;top:-848px;width:1920px;height:1080px"><div class="a" style="left:1728.00px;top:850.71px;font-family:'Liberation Sans',sans-serif;font-size:19.6px;line-height:25px;color:#1a1a1a">drwxr-xr-x</div></div></div>
<div class="a" style="left:1784.57px;top:850.71px;font-family:'Liberation Sans',sans-serif;font-size:19.6px;line-height:25px;color:#1a1a1a;transform:scaleX(1.0284);transform-origin:0 0">1970-01</div>
<div class="a" style="left:1860px;top:848px;width:40px;height:30px;overflow:hidden"><div style="position:absolute;left:-1860px;top:-848px;width:1920px;height:1080px"><div class="a" style="left:1871.00px;top:850.71px;font-family:'Liberation Sans',sans-serif;font-size:19.6px;line-height:25px;color:#1a1a1a">4 KB</div></div></div>
<svg class="a" style="left:1536px;top:886.8px" width="12" height="14" viewBox="0 0 12 14"><path d="M0 0 L11.5 6.8 L0 13.6 Z" fill="#a5a5a5"/></svg>
<svg class="a" style="left:1560.5px;top:885px" width="21" height="16" viewBox="0 0 21 16"><path d="M0 0 H8 L10.5 3 H21 V16 H0 Z" fill="#a2adb6"/></svg>
<div class="a" style="left:1530px;top:878px;width:184px;height:30px;overflow:hidden"><div style="position:absolute;left:-1530px;top:-878px;width:1920px;height:1080px"><div class="a" style="left:1586.70px;top:880.71px;font-family:'Liberation Sans',sans-serif;font-size:19.6px;line-height:25px;color:#1a1a1a">res</div></div></div>
<div class="a" style="left:1715px;top:878px;width:58px;height:30px;overflow:hidden"><div style="position:absolute;left:-1715px;top:-878px;width:1920px;height:1080px"><div class="a" style="left:1728.00px;top:880.71px;font-family:'Liberation Sans',sans-serif;font-size:19.6px;line-height:25px;color:#1a1a1a">drwxr-xr-x</div></div></div>
<div class="a" style="left:1784.57px;top:880.71px;font-family:'Liberation Sans',sans-serif;font-size:19.6px;line-height:25px;color:#1a1a1a;transform:scaleX(1.0284);transform-origin:0 0">1970-01</div>
<div class="a" style="left:1860px;top:878px;width:40px;height:30px;overflow:hidden"><div style="position:absolute;left:-1860px;top:-878px;width:1920px;height:1080px"><div class="a" style="left:1871.00px;top:880.71px;font-family:'Liberation Sans',sans-serif;font-size:19.6px;line-height:25px;color:#1a1a1a">80 B</div></div></div>
<svg class="a" style="left:1536px;top:916.8px" width="12" height="14" viewBox="0 0 12 14"><path d="M0 0 L11.5 6.8 L0 13.6 Z" fill="#a5a5a5"/></svg>
<svg class="a" style="left:1560.5px;top:915px" width="21" height="16" viewBox="0 0 21 16"><path d="M0 0 H8 L10.5 3 H21 V16 H0 Z" fill="#a2adb6"/></svg>
<div class="a" style="left:1530px;top:908px;width:184px;height:30px;overflow:hidden"><div style="position:absolute;left:-1530px;top:-908px;width:1920px;height:1080px"><div class="a" style="left:1586.70px;top:910.71px;font-family:'Liberation Sans',sans-serif;font-size:19.6px;line-height:25px;color:#1a1a1a">root</div></div></div>
<div class="a" style="left:1715px;top:908px;width:58px;height:30px;overflow:hidden"><div style="position:absolute;left:-1715px;top:-908px;width:1920px;height:1080px"><div class="a" style="left:1728.00px;top:910.71px;font-family:'Liberation Sans',sans-serif;font-size:19.6px;line-height:25px;color:#1a1a1a">drwx------</div></div></div>
<div class="a" style="left:1785.60px;top:910.71px;font-family:'Liberation Sans',sans-serif;font-size:19.6px;line-height:25px;color:#1a1a1a;transform:scaleX(1.0351);transform-origin:0 0">2017-11</div>
<div class="a" style="left:1860px;top:908px;width:40px;height:30px;overflow:hidden"><div style="position:absolute;left:-1860px;top:-908px;width:1920px;height:1080px"><div class="a" style="left:1871.00px;top:910.71px;font-family:'Liberation Sans',sans-serif;font-size:19.6px;line-height:25px;color:#1a1a1a">40 B</div></div></div>
<svg class="a" style="left:1536px;top:946.8px" width="12" height="14" viewBox="0 0 12 14"><path d="M0 0 L11.5 6.8 L0 13.6 Z" fill="#a5a5a5"/></svg>
<svg class="a" style="left:1560.5px;top:945px" width="21" height="16" viewBox="0 0 21 16"><path d="M0 0 H8 L10.5 3 H21 V16 H0 Z" fill="#a2adb6"/></svg>
<div class="a" style="left:1530px;top:938px;width:184px;height:30px;overflow:hidden"><div style="position:absolute;left:-1530px;top:-938px;width:1920px;height:1080px"><div class="a" style="left:1587.70px;top:940.71px;font-family:'Liberation Sans',sans-serif;font-size:19.6px;line-height:25px;color:#1a1a1a">sbin</div></div></div>
<div class="a" style="left:1715px;top:938px;width:58px;height:30px;overflow:hidden"><div style="position:absolute;left:-1715px;top:-938px;width:1920px;height:1080px"><div class="a" style="left:1728.00px;top:940.71px;font-family:'Liberation Sans',sans-serif;font-size:19.6px;line-height:25px;color:#1a1a1a">drwxr-x---</div></div></div>
<div class="a" style="left:1784.57px;top:940.71px;font-family:'Liberation Sans',sans-serif;font-size:19.6px;line-height:25px;color:#1a1a1a;transform:scaleX(1.0284);transform-origin:0 0">1970-01</div>
<div class="a" style="left:1860px;top:938px;width:40px;height:30px;overflow:hidden"><div style="position:absolute;left:-1860px;top:-938px;width:1920px;height:1080px"><div class="a" style="left:1871.00px;top:940.71px;font-family:'Liberation Sans',sans-serif;font-size:19.6px;line-height:25px;color:#1a1a1a">380 B</div></div></div>
<div class="a" style="left:1903px;top:217px;width:17px;height:746px;background:#f5f5f5"></div>
<div class="a" style="left:1905px;top:217px;width:13px;height:528px;background:#dcdcdc;border:1px solid #cfcfcf"></div>
<div class="a" style="left:1530px;top:962.5px;width:390px;height:25.5px;background:#f5f5f5;border-top:1px solid #d9d9d9"></div>
<div class="a" style="left:1532px;top:968.5px;width:142px;height:15.5px;background:#dcdcdc;border:1px solid #cfcfcf"></div>
<div class="a" style="left:0;top:987.5px;width:1920px;height:1.5px;background:#cdcdcd"></div>
<div class="a" style="left:0;top:989px;width:1920px;height:30px;background:#f2f2f2"></div>
<svg class="a" style="left:0;top:0;overflow:visible" width="1" height="1"><rect x="7.5" y="998" width="1.3" height="14" fill="#6e6e6e"/><rect x="26.8" y="998" width="1.3" height="14" fill="#6e6e6e"/><rect x="11.3" y="998.5" width="13" height="13" fill="none" stroke="#6e6e6e" stroke-width="1.3"/></svg>
<div class="a" style="left:41.50px;top:991.71px;font-family:'Liberation Sans',sans-serif;font-size:19.6px;line-height:25px;color:#1a1a1a;transform:scaleX(0.9846);transform-origin:0 0">* daemon started successfully (a minute ago)</div>
<div class="a" style="left:1512.09px;top:991.51px;font-family:'Liberation Sans',sans-serif;font-size:19.6px;line-height:25px;color:#1a1a1a;transform:scaleX(0.9076);transform-origin:0 0">1:1</div>
<div class="a" style="left:1555.67px;top:991.51px;font-family:'Liberation Sans',sans-serif;font-size:19.6px;line-height:25px;color:#1a1a1a;transform:scaleX(0.8267);transform-origin:0 0">CRLF</div>
<div class="a" style="left:1616.77px;top:991.51px;font-family:'Liberation Sans',sans-serif;font-size:19.6px;line-height:25px;color:#1a1a1a;transform:scaleX(0.9302);transform-origin:0 0">UTF-8</div>
<div class="a" style="left:1688.00px;top:991.51px;font-family:'Liberation Sans',sans-serif;font-size:19.6px;line-height:25px;color:#1a1a1a;transform:scaleX(0.9208);transform-origin:0 0">4 spaces</div>
<svg class="a" style="left:0;top:0;overflow:visible" width="1" height="1"><path d="M1779 1003 V999.5 A3.6 3.6 0 0 1 1786 999" fill="none" stroke="#6e6e6e" stroke-width="2"/><rect x="1782.5" y="1003" width="12" height="9.5" fill="#6e6e6e"/><path d="M1819 1000 Q1819 995.5 1823.8 995.5 Q1828.6 995.5 1828.6 1000 Z M1815.5 1000.3 H1832.3" fill="#6e6e6e" stroke="#6e6e6e" stroke-width="1.5"/><circle cx="1823.8" cy="1004.5" r="4.2" fill="none" stroke="#6e6e6e" stroke-width="1.4"/><path d="M1816 1013 Q1816 1008 1823.8 1008 Q1831.5 1008 1831.5 1013 Z" fill="#6e6e6e"/><path d="M1868.5 1012.5 V1004 A9 8.2 0 1 0 1859.5 1012.5 Z" fill="none" stroke="#6e6e6e" stroke-width="2"/><circle cx="1896" cy="1004.5" r="8.7" fill="#db5860"/><rect x="1894.7" y="998.5" width="2.6" height="7.5" fill="#fff"/><rect x="1894.7" y="1008" width="2.6" height="2.6" fill="#fff"/></svg>
<div class="a" style="left:0;top:1019px;width:1920px;height:1.3px;background:#1a1a1a"></div>
<div class="a" style="left:0;top:1020.3px;width:1920px;height:59.7px;background:#d8deea"></div>
<svg class="a" style="left:0;top:0;overflow:visible" width="1" height="1"><path d="M24 1041.3 L34.9 1039.6 V1049.3 H24 Z M36.1 1039.4 L48 1037.7 V1049.3 H36.1 Z M24 1050.5 H34.9 V1060.3 L24 1058.7 Z M36.1 1050.5 H48 V1062.3 L36.1 1060.5 Z" fill="#000"/></svg>
<div class="a" style="left:73.5px;top:1020.3px;width:512.5px;height:59.7px;background:#fff;border-bottom:2.5px solid #e3e5e8"></div>
<svg class="a" style="left:0;top:0;overflow:visible" width="1" height="1"><circle cx="105.8" cy="1046.3" r="7.4" fill="none" stroke="#000" stroke-width="1.6"/><path d="M100.5 1051.5 L90.5 1061.5" stroke="#000" stroke-width="1.8"/></svg>
<div class="a" style="left:131.50px;top:1036.18px;font-family:'Liberation Sans',sans-serif;font-size:24px;line-height:31px;color:#222;transform:scaleX(1.0070);transform-origin:0 0">在这里输入你要搜索的内容</div>
<svg class="a" style="left:0;top:0;overflow:visible" width="1" height="1"><circle cx="624" cy="1049.5" r="9.6" fill="none" stroke="#000" stroke-width="2.8"/><g transform="translate(678 1032)" fill="none" stroke="#000" stroke-width="1.1"><path d="M6.5 6 V9.5 H21.5 V6"/><rect x="6.5" y="12.3" width="15" height="10.2"/><path d="M6.5 28.5 V25.3 H21.5 V28.5"/><path d="M28.5 6 V11.5 M28.5 17.3 V28.5"/></g><rect x="705.3" y="1045.3" width="2.5" height="2.2" fill="#000"/></svg>
<div class="a" style="left:743px;top:1077px;width:61px;height:3px;background:#0f6cc7"></div>
<svg class="a" style="left:750px;top:1026px" width="50" height="46" viewBox="0 0 50 46"><defs><linearGradient id="eg1" x1="0" y1="0" x2="1" y2="0.8"><stop offset="0" stop-color="#33bdf5"/><stop offset="0.55" stop-color="#2ec9b0"/><stop offset="1" stop-color="#66e055"/></linearGradient><linearGradient id="eg2" x1="0" y1="0" x2="0.3" y2="1"><stop offset="0" stop-color="#1e93ea"/><stop offset="1" stop-color="#1475d3"/></linearGradient></defs>
<circle cx="23" cy="24" r="17.9" fill="url(#eg1)"/>
<path d="M5.1 23 C6 17 10.5 14.8 15.5 14.8 C21 14.8 25 18.5 25.5 22 L19 25 C19 30 24 33 30 32.5 C33.5 32.2 36 31.5 37.8 32.3 C34.5 38.5 29 41.9 23 41.9 C13 41.9 5.1 33.5 5.1 23 Z" fill="url(#eg2)"/>
<path d="M18.8 19.8 C15.8 23.5 15.5 30 18.2 35.5 C20.2 39.2 24 41.7 28 41.1 C33 40.2 36 36.2 37.8 32.3 C36 31.5 33.5 32.2 30 32.5 C24 33 18.8 29.5 18.8 24.7 Z" fill="#1258ae"/>
<path d="M25 29.8 H35 Q39.5 29.8 41.5 27 L42.5 34.5 L38.3 32.6 C36.5 31.6 33.5 32.2 30 32.5 C27.5 32.7 25.5 31.5 25 29.8 Z" fill="#d8deea"/>
<circle cx="22.9" cy="24.8" r="4.3" fill="#d8deea"/></svg>
<div class="a" style="left:812px;top:1020.3px;width:73px;height:59.7px;background:#e6eaf2"></div>
<div class="a" style="left:812px;top:1077px;width:73px;height:3px;background:#0f6cc7"></div>
<svg class="a" style="left:826px;top:1028px" width="46" height="44" viewBox="0 0 46 44"><path d="M11.5 8 Q16 4.5 24 6 Q33.5 9 34.8 18 Q35.5 26.5 26.5 29.5" fill="none" stroke="#d83b01" stroke-width="5" stroke-linecap="round"/><path d="M12 14 Q12.5 22 18.5 27" fill="none" stroke="#b83200" stroke-width="1.6"/><path d="M20.3 6 L24.8 5.5 L21 27 L19.5 27 Z" fill="#c4c4c8"/><path d="M30.3 15.3 L22.5 27.5 L21 26.5 L27.5 13 Z" fill="#a8a8b0"/><circle cx="12.6" cy="31.4" r="3.7" fill="none" stroke="#0f5bb5" stroke-width="2.4"/><circle cx="24.3" cy="35" r="3.7" fill="none" stroke="#1a9be0" stroke-width="2.4"/><path d="M15.5 29.5 L20 26.5 L21.5 31.5" fill="none" stroke="#0f5bb5" stroke-width="2.2"/></svg>
<svg class="a" style="left:900px;top:1026px" width="46" height="46" viewBox="0 0 46 46"><path d="M8.2 11.2 H19.3 L22 13.6 V16 H7.2 V12.2 Q7.2 11.2 8.2 11.2 Z" fill="#e2a514"/><rect x="7.2" y="13.8" width="30.8" height="22.2" rx="1.2" fill="#ffd55a"/><path d="M12.5 37 V26.5 Q12.5 25 14 25 H32.2 Q33.75 25 33.75 26.5 V37 H28.1 V30.6 H18.1 V37 Z" fill="#3a8fd6"/></svg>
<div class="a" style="left:968px;top:1077px;width:61px;height:3px;background:#0f6cc7"></div>
<svg class="a" style="left:900px;top:1026px" width="120" height="46" viewBox="0 0 120 46"><circle cx="97.6" cy="24" r="15.8" fill="#fbfcfe"/><rect x="90" y="18.5" width="15.6" height="11" fill="#4285f4"/><path d="M93 19 A5 5.2 0 0 1 103 19 Z" fill="#3ddc84"/><rect x="90" y="15.6" width="3" height="3" fill="#0b2233"/><path d="M97.2 20.5 L93.7 32 M97.2 20.5 L100.8 32" stroke="#0b2233" stroke-width="1.7" fill="none"/><rect x="104" y="18.8" width="1.7" height="13" fill="#0b2233"/></svg>
<div class="a" style="left:1389.8px;top:1032.4px;width:63px;height:33.6px;background:#fff;border:1px solid #b8b8b8;border-radius:2px"></div>
<div class="a" style="left:1452.5px;top:1041.7px;width:4px;height:15.5px;background:#fff;border:1px solid #b8b8b8;border-left:none"></div>
<div class="a" style="left:1393px;top:1036px;width:29.7px;height:26.8px;background:#22a04a"></div>
<div class="a" style="left:1422.7px;top:1036px;width:25.6px;height:26.8px;background:#a5a9af"></div>
<div class="a" style="left:1402.50px;top:1036.57px;font-family:'Liberation Sans',sans-serif;font-size:20px;line-height:26px;color:#fff;transform:scaleX(0.9069);transform-origin:0 0">54%</div>
<svg class="a" style="left:0;top:0;overflow:visible" width="1" height="1"><path d="M1467.5 1054.4 L1476.3 1045 L1485 1054.4" fill="none" stroke="#000" stroke-width="1.5"/><path d="M1501 1058 A5 5 0 0 1 1503 1048.5 A7 7 0 0 1 1516 1047 A5 5 0 0 1 1519 1052" fill="#fff" stroke="#222" stroke-width="1.4"/><path d="M1501.5 1058 H1512" stroke="#222" stroke-width="1.4"/><circle cx="1517" cy="1055" r="5.3" fill="#fff"/><path d="M1513.5 1054 A3.7 3.7 0 0 1 1520.5 1053.5 M1520.5 1056 A3.7 3.7 0 0 1 1513.5 1056.5" fill="none" stroke="#2577d6" stroke-width="1.5"/><rect x="1537.5" y="1045" width="20" height="12" fill="none" stroke="#000" stroke-width="1.5"/><rect x="1539.5" y="1047" width="9" height="8" fill="#000"/><rect x="1558.3" y="1048.5" width="2" height="5" fill="#000"/><circle cx="1583.5" cy="1049.7" r="10.8" fill="none" stroke="#000" stroke-width="1.4"/><ellipse cx="1583.5" cy="1049.7" rx="4.5" ry="10.8" fill="none" stroke="#000" stroke-width="1.3"/><path d="M1573 1046 H1594 M1573 1053.5 H1594" stroke="#000" stroke-width="1.3"/><circle cx="1592" cy="1057" r="5.2" fill="#d8deea" stroke="#000" stroke-width="1.4"/><path d="M1588.5 1060.5 L1595.5 1053.5" stroke="#000" stroke-width="1.3"/><path d="M1608.5 1045 H1613 L1619 1040 V1060 L1613 1055 H1608.5 Z" fill="none" stroke="#000" stroke-width="1.4"/><path d="M1622 1046 Q1624.5 1050 1622 1054 M1625.5 1043 Q1629.5 1050 1625.5 1057 M1629 1040 Q1634 1050 1629 1060" fill="none" stroke="#888" stroke-width="1.3"/><rect x="1686.5" y="1039.5" width="23" height="22" fill="#fff" stroke="#444" stroke-width="1.1"/></svg>
<div class="a" style="left:1642.00px;top:1036.18px;font-family:'Liberation Sans',sans-serif;font-size:24px;line-height:31px;color:#000">英</div>
<div class="a" style="left:1688.00px;top:1039.07px;font-family:'Liberation Sans',sans-serif;font-size:20px;line-height:26px;color:#000">拼</div>
<div class="a" style="left:1758.63px;top:1023.94px;font-family:'Liberation Sans',sans-serif;font-size:19.5px;line-height:25px;color:#000;transform:scaleX(0.9712);transform-origin:0 0">12:56</div>
<div class="a" style="left:1730.00px;top:1051.14px;font-family:'Liberation Sans',sans-serif;font-size:19.5px;line-height:25px;color:#000;transform:scaleX(1.0568);transform-origin:0 0">2020/12/10</div>
<svg class="a" style="left:0;top:0;overflow:visible" width="1" height="1"><path d="M1858 1038 H1882.5 V1056.5 H1866 L1861 1062 V1056.5 H1858 Z" fill="#000"/><path d="M1862 1043 H1878.5 M1862 1047 H1878.5 M1862 1051 H1878.5" stroke="#fff" stroke-width="1.2"/><circle cx="1881.5" cy="1061" r="10.5" fill="#c9ccd2" stroke="#555" stroke-width="1.3"/><path d="M1880 1055.5 L1883 1053.5 V1067.5" fill="none" stroke="#000" stroke-width="2.2"/><rect x="1912.5" y="1021" width="1.2" height="59" fill="#9aa0aa"/></svg>
</body></html>
